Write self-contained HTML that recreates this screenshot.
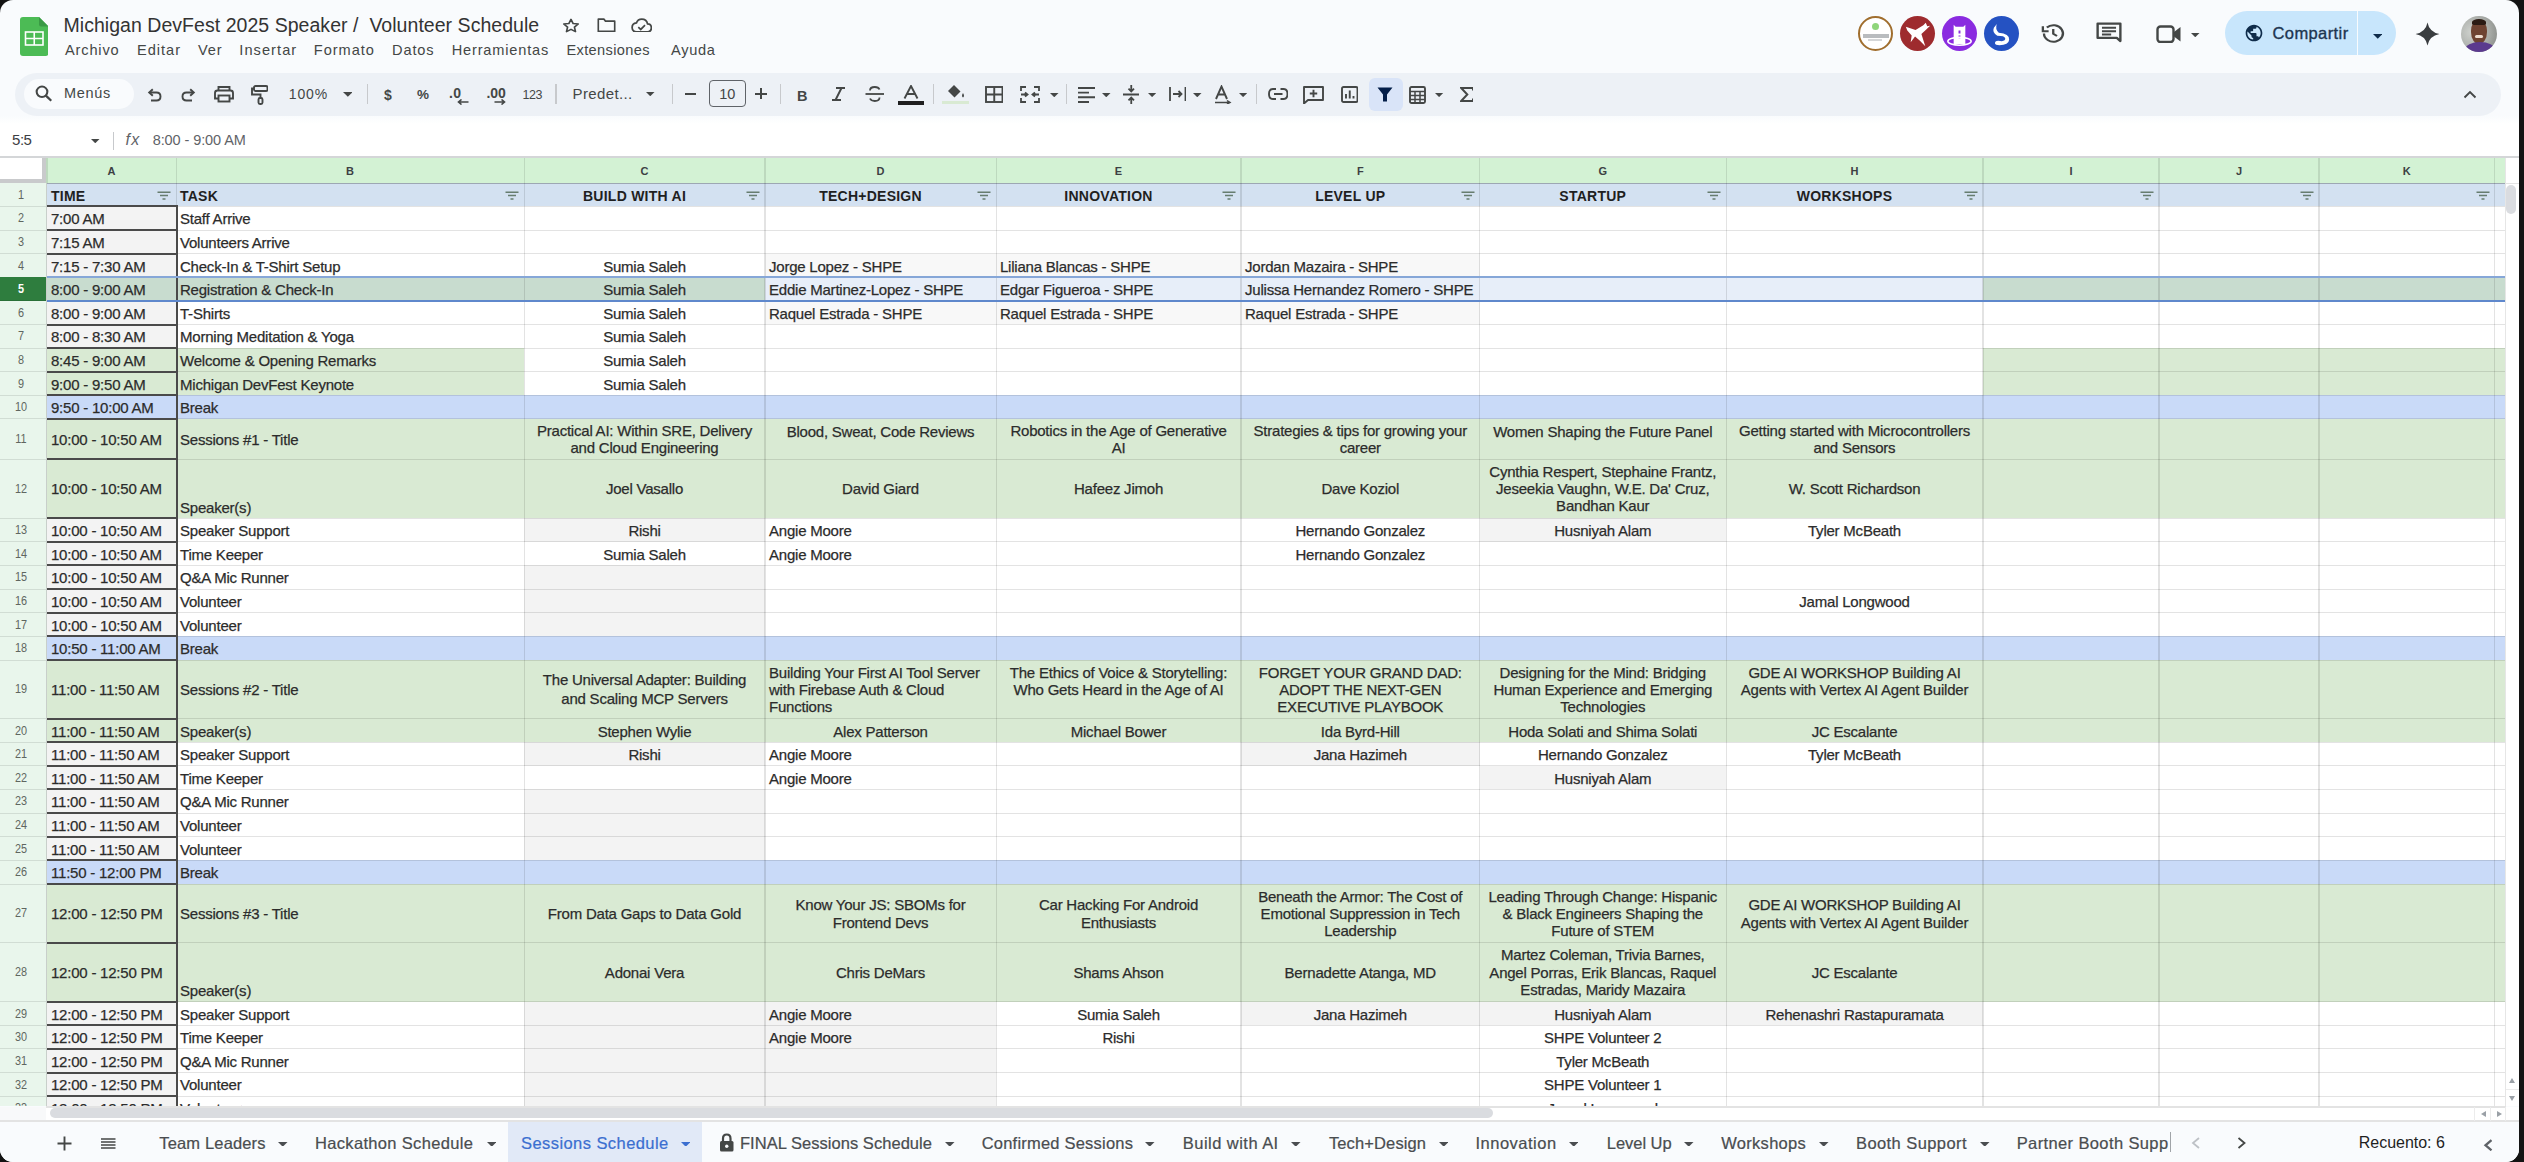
<!DOCTYPE html>
<html><head><meta charset="utf-8"><style>
html,body{margin:0;padding:0;background:#131313;width:2524px;height:1162px;overflow:hidden}
#win{position:absolute;left:0;top:0;width:2519px;height:1162px;border-radius:13px;background:#f9fbfd;overflow:hidden}
#win div,#win svg{position:absolute}
.t{white-space:pre;line-height:30px;font-family:"Liberation Sans",sans-serif}
</style></head><body><div id="win">
<svg style="left:19.5px;top:16.5px;" width="28.5" height="39" viewBox="0 0 28.5 39" preserveAspectRatio="none"><path d="M3 0H19L28.5 9.5V36Q28.5 39 25.5 39H3Q0 39 0 36V3Q0 0 3 0Z" fill="#4cbb55"/><path d="M19 0L28.5 9.5H21Q19 9.5 19 7.5Z" fill="#3a9a45"/><rect x="5.5" y="15" width="17.5" height="13" fill="none" stroke="#fff" stroke-width="1.6"/><path d="M5.5 21.5H23M14.25 15V28" stroke="#fff" stroke-width="1.6"/></svg>
<div class="t" style="left:63.5px;top:9.84px;font-size:19.5px;color:#333333;letter-spacing:0.04px;">Michigan DevFest 2025 Speaker /  Volunteer Schedule</div>
<svg style="left:561px;top:17px;" width="20" height="18" viewBox="0 0 24 24" preserveAspectRatio="none"><path d="M12 3.2l2.6 5.6 6.1.6-4.6 4.1 1.3 6-5.4-3.1-5.4 3.1 1.3-6-4.6-4.1 6.1-.6z" fill="none" stroke="#444746" stroke-width="2" stroke-linejoin="round"/></svg>
<svg style="left:597px;top:17.8px;" width="19" height="14.7" viewBox="0 0 22 15" preserveAspectRatio="none"><path d="M1.5 1.2H8l1.8 2H20.5V13.8H1.5Z" fill="none" stroke="#444746" stroke-width="1.9" stroke-linejoin="round"/></svg>
<svg style="left:630.5px;top:17.5px;" width="21.5" height="14.8" viewBox="0 0 23 15.5" preserveAspectRatio="none"><path d="M6 14.5H17.5Q21.8 14.5 21.8 10.3Q21.8 6.5 17.8 6.2Q16.5 1.2 11.5 1.2Q7.3 1.2 5.8 5.2Q1.2 5.7 1.2 10Q1.2 14.5 6 14.5Z" fill="none" stroke="#444746" stroke-width="1.9"/><path d="M7.8 9.6l2.6 2.4 4.6-4.6" fill="none" stroke="#444746" stroke-width="1.8"/></svg>
<div class="t" style="left:65px;top:35.24px;font-size:14.6px;color:#444746;letter-spacing:0.83px;">Archivo</div>
<div class="t" style="left:137px;top:35.24px;font-size:14.6px;color:#444746;letter-spacing:0.98px;">Editar</div>
<div class="t" style="left:198px;top:35.24px;font-size:14.6px;color:#444746;letter-spacing:0.86px;">Ver</div>
<div class="t" style="left:239.3px;top:35.24px;font-size:14.6px;color:#444746;letter-spacing:1.06px;">Insertar</div>
<div class="t" style="left:313.8px;top:35.24px;font-size:14.6px;color:#444746;letter-spacing:0.95px;">Formato</div>
<div class="t" style="left:392px;top:35.24px;font-size:14.6px;color:#444746;letter-spacing:0.87px;">Datos</div>
<div class="t" style="left:451.7px;top:35.24px;font-size:14.6px;color:#444746;letter-spacing:0.82px;">Herramientas</div>
<div class="t" style="left:566.4px;top:35.24px;font-size:14.6px;color:#444746;letter-spacing:0.36px;">Extensiones</div>
<div class="t" style="left:671px;top:35.24px;font-size:14.6px;color:#444746;letter-spacing:0.71px;">Ayuda</div>
<div style="left:1857.5px;top:15.5px;width:31.5px;height:31.5px;border-radius:50%;border:2.2px solid #a06e2e;background:#ffffff"></div>
<div style="left:1871.5px;top:22.5px;width:7.5px;height:7.5px;border-radius:50%;background:#8fd57a"></div>
<div style="left:1862.5px;top:34px;width:26px;height:3.5px;background:#b9bcbf"></div>
<div style="left:1868px;top:39px;width:14px;height:1.5px;background:#d5d7d9"></div>
<div style="left:1900px;top:15.5px;width:35px;height:35px;border-radius:50%;background:#9e2b2e"></div>
<svg style="left:1900px;top:15.5px;" width="35" height="35" viewBox="0 0 36 36" preserveAspectRatio="none"><path d="M6 11L16 14.5L24 9.5L26.5 7L28 10.5L31 10L27 14L22 18.5L26 31L20.5 25.5L15.5 21L11 27L12 20L7.5 15Z" fill="#fff"/></svg>
<div style="left:1941.7px;top:15.5px;width:35px;height:35px;border-radius:50%;background:#8a2be0"></div>
<svg style="left:1941.7px;top:15.5px;" width="35" height="35" viewBox="0 0 36 36" preserveAspectRatio="none"><path d="M12 9L14 11H22L24 9V29H12Z" fill="#fff"/><path d="M17 15h2v3h-2zM17 20h2v3h-2z" fill="#8a2be0"/><ellipse cx="18" cy="26" rx="12" ry="4" fill="none" stroke="#fff" stroke-width="1.6"/></svg>
<div style="left:1983.5px;top:15.5px;width:35.5px;height:35.5px;border-radius:50%;background:#2552c2"></div>
<svg style="left:1983.5px;top:15.5px;" width="35.5" height="35.5" viewBox="0 0 36 36" preserveAspectRatio="none"><path d="M13 8Q11 13 15 17Q26 18 25.5 24Q25 30 14 29.5Q10 29 11.5 26Q13 24.5 18 25.5Q22 25 21.5 22.5Q21 20 13.5 20Q8 17 10 12Z" fill="#fff"/></svg>
<svg style="left:2039.5px;top:22px;" width="26.5" height="23" viewBox="0 0 24 24" preserveAspectRatio="none"><path d="M3.6 12A8.6 8.6 0 1 0 6.2 5.8" fill="none" stroke="#444746" stroke-width="2.1"/><path d="M2.6 4.4V9.6H7.8" fill="none" stroke="#444746" stroke-width="2.1"/><path d="M12 7.2V12.3L15.4 14.6" fill="none" stroke="#444746" stroke-width="2.1"/></svg>
<svg style="left:2095.5px;top:22px;" width="26" height="23" viewBox="0 0 24 22" preserveAspectRatio="none"><path d="M1.5 1.5H22.5V18.2L19.2 15.2H1.5Z" fill="none" stroke="#444746" stroke-width="2.2" stroke-linejoin="round"/><path d="M5.5 5.5H18.5M5.5 8.8H18.5M5.5 12H14" stroke="#444746" stroke-width="1.8"/></svg>
<svg style="left:2156px;top:24.5px;" width="26" height="18.5" viewBox="0 0 26 18.5" preserveAspectRatio="none"><rect x="1.5" y="1.5" width="16" height="15.5" rx="3" fill="none" stroke="#444746" stroke-width="2.4"/><path d="M18 7L24.5 2V16.5L18 11.5Z" fill="#444746"/></svg>
<svg style="left:2191px;top:32.5px" width="8.5" height="4.25" viewBox="0 0 10 5"><path d="M0 0H10L5 5Z" fill="#444746"/></svg>
<div style="left:2225px;top:11px;width:171px;height:44px;border-radius:22px;background:#c8e6fc"></div>
<div style="left:2357px;top:11px;width:1px;height:44px;background:#f9fbfd;"></div>
<svg style="left:2244px;top:23px;" width="20" height="20" viewBox="0 0 24 24" preserveAspectRatio="none"><path d="M12 2C6.48 2 2 6.48 2 12s4.48 10 10 10 10-4.48 10-10S17.52 2 12 2zm-1 17.93c-3.95-.49-7-3.85-7-7.93 0-.62.08-1.21.21-1.79L9 15v1c0 1.1.9 2 2 2v1.930zm6.9-2.54c-.26-.81-1-1.39-1.9-1.39h-1v-3c0-.55-.45-1-1-1H8v-2h2c.55 0 1-.45 1-1V7h2c1.1 0 2-.9 2-2v-.41c2.930 1.19 5 4.06 5 7.41 0 2.08-.8 3.97-2.1 5.39z" fill="#0f2c4a"/></svg>
<div class="t" style="left:2272.5px;top:18.08px;font-size:16.5px;color:#1d3550;letter-spacing:0.4px;-webkit-text-stroke:0.35px #1d3550;">Compartir</div>
<svg style="left:2372.5px;top:34px" width="9.5" height="4.75" viewBox="0 0 10 5"><path d="M0 0H10L5 5Z" fill="#0f2c4a"/></svg>
<svg style="left:2415px;top:21.5px;" width="25" height="24" viewBox="0 0 24 24" preserveAspectRatio="none"><path d="M12 0.5Q13.8 10.2 23.5 12Q13.8 13.8 12 23.5Q10.2 13.8 0.5 12Q10.2 10.2 12 0.5Z" fill="#3a3d40"/></svg>
<div style="left:2461px;top:15.5px;width:36px;height:36px;border-radius:50%;overflow:hidden;background:radial-gradient(circle at 30% 45%,#d0d3cf 0,#a9aca8 55%,#7d807c 100%)"><div style="left:10px;top:4px;width:16px;height:24px;border-radius:45% 45% 50% 50%;background:#6e4332"></div><div style="left:11px;top:3px;width:14px;height:6px;border-radius:50% 50% 20% 20%;background:#2b1b14"></div><div style="left:4px;top:26px;width:30px;height:16px;border-radius:50% 50% 0 0;background:#5b3a8e"></div><div style="left:14px;top:19px;width:8px;height:3px;border-radius:2px;background:#ecdccf"></div></div>
<div style="left:15px;top:72.5px;width:2486px;height:43px;border-radius:22px;background:#edf1f6"></div>
<div style="left:23.5px;top:79px;width:110px;height:29.5px;border-radius:15px;background:#f9fbfd"></div>
<svg style="left:34.5px;top:85px;" width="17.5" height="17" viewBox="0 0 17 17" preserveAspectRatio="none"><circle cx="6.8" cy="6.8" r="5.2" fill="none" stroke="#444746" stroke-width="2"/><path d="M10.6 10.6L15.8 15.8" stroke="#444746" stroke-width="2.2"/></svg>
<div class="t" style="left:64px;top:78.28px;font-size:14.5px;color:#444746;letter-spacing:0.7px;">Menús</div>
<svg style="left:146.5px;top:88px;" width="15" height="14" viewBox="0 0 15 14" preserveAspectRatio="none"><path d="M3 4.5H9.5Q13.5 4.5 13.5 8.5Q13.5 12.5 9.5 12.5H4" fill="none" stroke="#444746" stroke-width="1.9"/><path d="M5.8 1.2L2.2 4.5L5.8 7.8" fill="none" stroke="#444746" stroke-width="1.9"/></svg>
<svg style="left:180.5px;top:88px;" width="15" height="14" viewBox="0 0 15 14" preserveAspectRatio="none"><path d="M12 4.5H5.5Q1.5 4.5 1.5 8.5Q1.5 12.5 5.5 12.5H11" fill="none" stroke="#444746" stroke-width="1.9"/><path d="M9.2 1.2L12.8 4.5L9.2 7.8" fill="none" stroke="#444746" stroke-width="1.9"/></svg>
<svg style="left:214px;top:86px;" width="20" height="16.5" viewBox="0 0 20 16.5" preserveAspectRatio="none"><path d="M4.5 4.5V1H15.5V4.5" fill="none" stroke="#444746" stroke-width="1.9"/><path d="M4.5 12.5H1V7Q1 4.5 3.5 4.5H16.5Q19 4.5 19 7V12.5H15.5" fill="none" stroke="#444746" stroke-width="1.9"/><rect x="4.5" y="9.5" width="11" height="6" fill="none" stroke="#444746" stroke-width="1.9"/></svg>
<svg style="left:250.5px;top:85px;" width="17.5" height="20" viewBox="0 0 17.5 20" preserveAspectRatio="none"><rect x="3" y="1" width="13.5" height="5" rx="1.5" fill="none" stroke="#444746" stroke-width="1.9"/><path d="M3 3.5H1V9.5H9.5V13" fill="none" stroke="#444746" stroke-width="1.9"/><rect x="7.5" y="13" width="4" height="6" rx="1.5" fill="none" stroke="#444746" stroke-width="1.9"/></svg>
<div class="t" style="left:288.7px;top:79.35px;font-size:14px;color:#444746;letter-spacing:0.92px;">100%</div>
<svg style="left:342.8px;top:92px" width="9.7" height="4.85" viewBox="0 0 10 5"><path d="M0 0H10L5 5Z" fill="#444746"/></svg>
<div style="left:367px;top:84px;width:1px;height:20px;background:#c7c9cc;"></div>
<div style="left:555px;top:84px;width:2px;height:20px;background:#c7c9cc;"></div>
<div style="left:672px;top:84px;width:1px;height:20px;background:#c7c9cc;"></div>
<div style="left:780px;top:84px;width:1px;height:20px;background:#c7c9cc;"></div>
<div style="left:933px;top:84px;width:1px;height:20px;background:#c7c9cc;"></div>
<div style="left:1066px;top:84px;width:1px;height:20px;background:#c7c9cc;"></div>
<div style="left:1256px;top:84px;width:1px;height:20px;background:#c7c9cc;"></div>
<div class="t" style="left:384px;top:79.65px;font-size:14px;color:#444746;font-weight:bold;">$</div>
<div class="t" style="left:417px;top:79.82px;font-size:13.5px;color:#444746;font-weight:bold;">%</div>
<div class="t" style="left:449px;top:77.65px;font-size:14px;color:#444746;font-weight:bold;letter-spacing:0.41px;">.0</div>
<svg style="left:457px;top:99px;" width="12" height="6" viewBox="0 0 12 6" preserveAspectRatio="none"><path d="M11.5 3H2M4.5 0.5L1.5 3L4.5 5.5" fill="none" stroke="#444746" stroke-width="1.6"/></svg>
<div class="t" style="left:486.5px;top:77.65px;font-size:14px;color:#444746;font-weight:bold;letter-spacing:-0.15px;">.00</div>
<svg style="left:494px;top:99px;" width="12" height="6" viewBox="0 0 12 6" preserveAspectRatio="none"><path d="M0.5 3H10M7.5 0.5L10.5 3L7.5 5.5" fill="none" stroke="#444746" stroke-width="1.6"/></svg>
<div class="t" style="left:522.5px;top:79.87px;font-size:12.5px;color:#444746;letter-spacing:-0.45px;">123</div>
<div class="t" style="left:572.6px;top:79px;font-size:15px;color:#444746;letter-spacing:0.37px;">Predet...</div>
<svg style="left:646px;top:92px" width="8.5" height="4.25" viewBox="0 0 10 5"><path d="M0 0H10L5 5Z" fill="#444746"/></svg>
<div style="left:685px;top:93px;width:11px;height:2px;background:#444746;"></div>
<div style="left:708.6px;top:80px;width:35px;height:25px;border:1.3px solid #5f6368;border-radius:4px"></div>
<div class="t" style="left:-272.8px;top:79.48px;width:2000px;text-align:center;font-size:14.5px;color:#444746;">10</div>
<div style="left:755px;top:93px;width:12px;height:2px;background:#444746;"></div>
<div style="left:760px;top:88px;width:2px;height:11px;background:#444746;"></div>
<div class="t" style="left:797px;top:80.58px;font-size:14.5px;color:#444746;font-weight:bold;">B</div>
<svg style="left:831px;top:87px;" width="15" height="14" viewBox="0 0 15 14" preserveAspectRatio="none"><path d="M5 1H14M1 13H10M10.5 1L4.5 13" fill="none" stroke="#444746" stroke-width="1.9"/></svg>
<svg style="left:864.5px;top:86px;" width="19.5" height="16" viewBox="0 0 19.5 16" preserveAspectRatio="none"><path d="M14.5 3.5Q13.5 1 9.8 1Q5 1 5 4.5" fill="none" stroke="#444746" stroke-width="1.8"/><path d="M5 12.5Q6 15 9.8 15Q14.5 15 14.5 11.5" fill="none" stroke="#444746" stroke-width="1.8"/><path d="M0.5 8H19" stroke="#444746" stroke-width="1.8"/></svg>
<svg style="left:900px;top:85px;" width="22" height="14" viewBox="0 0 22 14" preserveAspectRatio="none"><path d="M4.5 13.5L11 1L17.5 13.5M7 9H15" fill="none" stroke="#444746" stroke-width="1.9"/></svg>
<div style="left:898px;top:101px;width:26px;height:4px;background:#1f1f1f;"></div>
<svg style="left:946px;top:83.5px;" width="20" height="15" viewBox="0 0 20 15" preserveAspectRatio="none"><path d="M2 7L8 1L14.5 7.5L8.5 13.5Z" fill="#444746"/><path d="M17 9Q19 12 17 13.5Q15 12 17 9Z" fill="#444746"/></svg>
<div style="left:942px;top:101px;width:27px;height:3px;background:#d9ead3;"></div>
<svg style="left:984.5px;top:86px;" width="18.5" height="17" viewBox="0 0 18.5 17" preserveAspectRatio="none"><rect x="1" y="1" width="16.5" height="15" fill="none" stroke="#444746" stroke-width="1.9"/><path d="M9.25 1V16M1 8.5H17.5" stroke="#444746" stroke-width="1.9"/></svg>
<svg style="left:1020px;top:86px;" width="20" height="17" viewBox="0 0 20 17" preserveAspectRatio="none"><path d="M1 5V1H6M14 1H19V5M19 12V16H14M6 16H1V12M1 8.5H7M13 8.5H19M5 6.5L7.5 8.5L5 10.5M15 6.5L12.5 8.5L15 10.5" fill="none" stroke="#444746" stroke-width="1.8"/></svg>
<svg style="left:1050px;top:92.5px" width="8.5" height="4.25" viewBox="0 0 10 5"><path d="M0 0H10L5 5Z" fill="#444746"/></svg>
<svg style="left:1077.5px;top:86.5px;" width="17.5" height="16" viewBox="0 0 17.5 16" preserveAspectRatio="none"><path d="M0 1H17.5M0 5.6H11M0 10.3H17.5M0 15H11" stroke="#444746" stroke-width="1.9"/></svg>
<svg style="left:1102px;top:92.5px" width="8.5" height="4.25" viewBox="0 0 10 5"><path d="M0 0H10L5 5Z" fill="#444746"/></svg>
<svg style="left:1122.5px;top:85px;" width="16.5" height="19" viewBox="0 0 16.5 19" preserveAspectRatio="none"><path d="M0 9.5H16.5M8.25 0V6.5M5.5 3.7L8.25 6.5L11 3.7M8.25 19V12.5M5.5 15.3L8.25 12.5L11 15.3" fill="none" stroke="#444746" stroke-width="1.8"/></svg>
<svg style="left:1147.8px;top:92.5px" width="8.2" height="4.1" viewBox="0 0 10 5"><path d="M0 0H10L5 5Z" fill="#444746"/></svg>
<svg style="left:1168.5px;top:86px;" width="17.5" height="16" viewBox="0 0 17.5 16" preserveAspectRatio="none"><path d="M1 1V15M16.5 1V15M4 8H12M9.5 5L12.5 8L9.5 11" fill="none" stroke="#444746" stroke-width="1.8"/></svg>
<svg style="left:1193px;top:92.5px" width="8.5" height="4.25" viewBox="0 0 10 5"><path d="M0 0H10L5 5Z" fill="#444746"/></svg>
<svg style="left:1213.5px;top:85px;" width="18" height="19" viewBox="0 0 18 19" preserveAspectRatio="none"><path d="M2 14L7.5 1.5L13 14M4.2 9.5H10.8" fill="none" stroke="#444746" stroke-width="1.9"/><path d="M1 17.5H15M13 15.5L16 17.5L13 19" fill="none" stroke="#444746" stroke-width="1.5"/></svg>
<svg style="left:1238.8px;top:92.5px" width="8.2" height="4.1" viewBox="0 0 10 5"><path d="M0 0H10L5 5Z" fill="#444746"/></svg>
<svg style="left:1267.5px;top:88px;" width="20.5" height="12" viewBox="0 0 20.5 12" preserveAspectRatio="none"><path d="M8 1H5Q1 1 1 6Q1 11 5 11H8M12.5 1H15.5Q19.5 1 19.5 6Q19.5 11 15.5 11H12.5M6 6H14.5" fill="none" stroke="#444746" stroke-width="1.9"/></svg>
<svg style="left:1303px;top:85.5px;" width="21" height="18.5" viewBox="0 0 21 18.5" preserveAspectRatio="none"><path d="M1 1H20V14H5L1 17.5Z" fill="none" stroke="#444746" stroke-width="1.9" stroke-linejoin="round"/><path d="M10.5 3.8V11.2M6.8 7.5H14.2" stroke="#444746" stroke-width="1.9"/></svg>
<svg style="left:1340.5px;top:86px;" width="17.5" height="17" viewBox="0 0 17.5 17" preserveAspectRatio="none"><rect x="1" y="1" width="15.5" height="15" rx="1.5" fill="none" stroke="#444746" stroke-width="1.9"/><path d="M5 12.5V8M8.75 12.5V4.5M12.5 12.5V10" stroke="#444746" stroke-width="1.9"/></svg>
<div style="left:1368.8px;top:78px;width:34px;height:32.5px;border-radius:6px;background:#d9e4f8"></div>
<svg style="left:1377px;top:87px;" width="16" height="15" viewBox="0 0 16 15" preserveAspectRatio="none"><path d="M0.5 0.5H15.5L10 7.5V14.5H6V7.5Z" fill="#041e49"/></svg>
<svg style="left:1409px;top:86px;" width="19" height="18" viewBox="0 0 19 18" preserveAspectRatio="none"><rect x="1" y="1" width="15" height="16" rx="1.5" fill="none" stroke="#444746" stroke-width="1.9"/><path d="M1 5.5H16M6 5.5V17M11 5.5V17M1 9.5H16M1 13.5H16" stroke="#444746" stroke-width="1.5"/></svg>
<svg style="left:1435.4px;top:92.5px" width="8.2" height="4.1" viewBox="0 0 10 5"><path d="M0 0H10L5 5Z" fill="#444746"/></svg>
<svg style="left:1459.5px;top:87px;" width="13.5" height="15" viewBox="0 0 13.5 15" preserveAspectRatio="none"><path d="M13 3.5V1H1.2L7.3 7.5L1.2 14H13V11.5" fill="none" stroke="#444746" stroke-width="2" stroke-linejoin="miter"/></svg>
<svg style="left:2463px;top:89px;" width="14" height="10" viewBox="0 0 14 10" preserveAspectRatio="none"><path d="M1.5 8.5L7 3L12.5 8.5" fill="none" stroke="#444746" stroke-width="1.9"/></svg>
<div style="left:0px;top:123px;width:2519px;height:33px;background:#ffffff;"></div>
<div style="left:0;top:116px;width:2519px;height:8px;background:linear-gradient(#f9fbfd,#ffffff)"></div>
<div class="t" style="left:12px;top:125px;font-size:15px;color:#3c4043;letter-spacing:-0.45px;">5:5</div>
<svg style="left:91px;top:138.6px" width="8.5" height="4.25" viewBox="0 0 10 5"><path d="M0 0H10L5 5Z" fill="#444746"/></svg>
<div style="left:113px;top:132px;width:1px;height:18px;background:#c7c9cc;"></div>
<div class="t" style="left:125.5px;top:125.46px;font-size:16px;color:#5f6368;letter-spacing:1.28px;font-style:italic;font-family:"Liberation Serif",serif;">fx</div>
<div class="t" style="left:152.7px;top:125.18px;font-size:14.5px;color:#5f6368;letter-spacing:-0.09px;">8:00 - 9:00 AM</div>
<div id="grid" style="left:0;top:0;width:2519px;height:1106px;overflow:hidden;position:absolute">
<div style="left:46px;top:158px;width:2460px;height:949px;background:#fff;"></div>
<div style="left:47px;top:206px;width:129px;height:24px;background:#f3f3f3;"></div>
<div style="left:47px;top:230px;width:129px;height:24px;background:#f3f3f3;"></div>
<div style="left:47px;top:254px;width:129px;height:23px;background:#f3f3f3;"></div>
<div style="left:47px;top:277px;width:129px;height:24px;background:#c8dccf;"></div>
<div style="left:47px;top:301px;width:129px;height:23px;background:#f3f3f3;"></div>
<div style="left:47px;top:324px;width:129px;height:24px;background:#f3f3f3;"></div>
<div style="left:47px;top:348px;width:129px;height:24px;background:#d9ead3;"></div>
<div style="left:47px;top:372px;width:129px;height:23px;background:#d9ead3;"></div>
<div style="left:47px;top:395px;width:129px;height:24px;background:#c9daf8;"></div>
<div style="left:47px;top:419px;width:129px;height:41px;background:#d9ead3;"></div>
<div style="left:47px;top:460px;width:129px;height:58px;background:#d9ead3;"></div>
<div style="left:47px;top:518px;width:129px;height:24px;background:#f3f3f3;"></div>
<div style="left:47px;top:542px;width:129px;height:23px;background:#f3f3f3;"></div>
<div style="left:47px;top:565px;width:129px;height:24px;background:#f3f3f3;"></div>
<div style="left:47px;top:589px;width:129px;height:24px;background:#f3f3f3;"></div>
<div style="left:47px;top:613px;width:129px;height:23px;background:#f3f3f3;"></div>
<div style="left:47px;top:636px;width:129px;height:24px;background:#c9daf8;"></div>
<div style="left:47px;top:660px;width:129px;height:59px;background:#d9ead3;"></div>
<div style="left:47px;top:719px;width:129px;height:23px;background:#d9ead3;"></div>
<div style="left:47px;top:742px;width:129px;height:24px;background:#f3f3f3;"></div>
<div style="left:47px;top:766px;width:129px;height:23px;background:#f3f3f3;"></div>
<div style="left:47px;top:789px;width:129px;height:24px;background:#f3f3f3;"></div>
<div style="left:47px;top:813px;width:129px;height:24px;background:#f3f3f3;"></div>
<div style="left:47px;top:837px;width:129px;height:23px;background:#f3f3f3;"></div>
<div style="left:47px;top:860px;width:129px;height:24px;background:#c9daf8;"></div>
<div style="left:47px;top:884px;width:129px;height:59px;background:#d9ead3;"></div>
<div style="left:47px;top:943px;width:129px;height:59px;background:#d9ead3;"></div>
<div style="left:47px;top:1002px;width:129px;height:23px;background:#f3f3f3;"></div>
<div style="left:47px;top:1025px;width:129px;height:24px;background:#f3f3f3;"></div>
<div style="left:47px;top:1049px;width:129px;height:24px;background:#f3f3f3;"></div>
<div style="left:47px;top:1073px;width:129px;height:23px;background:#f3f3f3;"></div>
<div style="left:47px;top:1096px;width:129px;height:11px;background:#f3f3f3;"></div>
<div style="left:47px;top:183px;width:129px;height:23px;background:#d3e1f1;"></div>
<div style="left:176px;top:183px;width:348px;height:23px;background:#d3e1f1;"></div>
<div style="left:524px;top:183px;width:241px;height:23px;background:#d3e1f1;"></div>
<div style="left:765px;top:183px;width:231px;height:23px;background:#d3e1f1;"></div>
<div style="left:996px;top:183px;width:245px;height:23px;background:#d3e1f1;"></div>
<div style="left:1241px;top:183px;width:239px;height:23px;background:#d3e1f1;"></div>
<div style="left:1480px;top:183px;width:246px;height:23px;background:#d3e1f1;"></div>
<div style="left:1726px;top:183px;width:257px;height:23px;background:#d3e1f1;"></div>
<div style="left:1983px;top:183px;width:176px;height:23px;background:#d3e1f1;"></div>
<div style="left:2159px;top:183px;width:160px;height:23px;background:#d3e1f1;"></div>
<div style="left:2319px;top:183px;width:175px;height:23px;background:#d3e1f1;"></div>
<div style="left:2494px;top:183px;width:12px;height:23px;background:#d3e1f1;"></div>
<div style="left:176px;top:348px;width:348px;height:24px;background:#d9ead3;"></div>
<div style="left:1983px;top:348px;width:176px;height:24px;background:#d9ead3;"></div>
<div style="left:2159px;top:348px;width:160px;height:24px;background:#d9ead3;"></div>
<div style="left:2319px;top:348px;width:175px;height:24px;background:#d9ead3;"></div>
<div style="left:2494px;top:348px;width:12px;height:24px;background:#d9ead3;"></div>
<div style="left:176px;top:372px;width:348px;height:23px;background:#d9ead3;"></div>
<div style="left:1983px;top:372px;width:176px;height:23px;background:#d9ead3;"></div>
<div style="left:2159px;top:372px;width:160px;height:23px;background:#d9ead3;"></div>
<div style="left:2319px;top:372px;width:175px;height:23px;background:#d9ead3;"></div>
<div style="left:2494px;top:372px;width:12px;height:23px;background:#d9ead3;"></div>
<div style="left:176px;top:395px;width:348px;height:24px;background:#c9daf8;"></div>
<div style="left:524px;top:395px;width:241px;height:24px;background:#c9daf8;"></div>
<div style="left:765px;top:395px;width:231px;height:24px;background:#c9daf8;"></div>
<div style="left:996px;top:395px;width:245px;height:24px;background:#c9daf8;"></div>
<div style="left:1241px;top:395px;width:239px;height:24px;background:#c9daf8;"></div>
<div style="left:1480px;top:395px;width:246px;height:24px;background:#c9daf8;"></div>
<div style="left:1726px;top:395px;width:257px;height:24px;background:#c9daf8;"></div>
<div style="left:1983px;top:395px;width:176px;height:24px;background:#c9daf8;"></div>
<div style="left:2159px;top:395px;width:160px;height:24px;background:#c9daf8;"></div>
<div style="left:2319px;top:395px;width:175px;height:24px;background:#c9daf8;"></div>
<div style="left:2494px;top:395px;width:12px;height:24px;background:#c9daf8;"></div>
<div style="left:176px;top:636px;width:348px;height:24px;background:#c9daf8;"></div>
<div style="left:524px;top:636px;width:241px;height:24px;background:#c9daf8;"></div>
<div style="left:765px;top:636px;width:231px;height:24px;background:#c9daf8;"></div>
<div style="left:996px;top:636px;width:245px;height:24px;background:#c9daf8;"></div>
<div style="left:1241px;top:636px;width:239px;height:24px;background:#c9daf8;"></div>
<div style="left:1480px;top:636px;width:246px;height:24px;background:#c9daf8;"></div>
<div style="left:1726px;top:636px;width:257px;height:24px;background:#c9daf8;"></div>
<div style="left:1983px;top:636px;width:176px;height:24px;background:#c9daf8;"></div>
<div style="left:2159px;top:636px;width:160px;height:24px;background:#c9daf8;"></div>
<div style="left:2319px;top:636px;width:175px;height:24px;background:#c9daf8;"></div>
<div style="left:2494px;top:636px;width:12px;height:24px;background:#c9daf8;"></div>
<div style="left:176px;top:860px;width:348px;height:24px;background:#c9daf8;"></div>
<div style="left:524px;top:860px;width:241px;height:24px;background:#c9daf8;"></div>
<div style="left:765px;top:860px;width:231px;height:24px;background:#c9daf8;"></div>
<div style="left:996px;top:860px;width:245px;height:24px;background:#c9daf8;"></div>
<div style="left:1241px;top:860px;width:239px;height:24px;background:#c9daf8;"></div>
<div style="left:1480px;top:860px;width:246px;height:24px;background:#c9daf8;"></div>
<div style="left:1726px;top:860px;width:257px;height:24px;background:#c9daf8;"></div>
<div style="left:1983px;top:860px;width:176px;height:24px;background:#c9daf8;"></div>
<div style="left:2159px;top:860px;width:160px;height:24px;background:#c9daf8;"></div>
<div style="left:2319px;top:860px;width:175px;height:24px;background:#c9daf8;"></div>
<div style="left:2494px;top:860px;width:12px;height:24px;background:#c9daf8;"></div>
<div style="left:176px;top:419px;width:348px;height:41px;background:#d9ead3;"></div>
<div style="left:524px;top:419px;width:241px;height:41px;background:#d9ead3;"></div>
<div style="left:765px;top:419px;width:231px;height:41px;background:#d9ead3;"></div>
<div style="left:996px;top:419px;width:245px;height:41px;background:#d9ead3;"></div>
<div style="left:1241px;top:419px;width:239px;height:41px;background:#d9ead3;"></div>
<div style="left:1480px;top:419px;width:246px;height:41px;background:#d9ead3;"></div>
<div style="left:1726px;top:419px;width:257px;height:41px;background:#d9ead3;"></div>
<div style="left:1983px;top:419px;width:176px;height:41px;background:#d9ead3;"></div>
<div style="left:2159px;top:419px;width:160px;height:41px;background:#d9ead3;"></div>
<div style="left:2319px;top:419px;width:175px;height:41px;background:#d9ead3;"></div>
<div style="left:2494px;top:419px;width:12px;height:41px;background:#d9ead3;"></div>
<div style="left:176px;top:460px;width:348px;height:58px;background:#d9ead3;"></div>
<div style="left:524px;top:460px;width:241px;height:58px;background:#d9ead3;"></div>
<div style="left:765px;top:460px;width:231px;height:58px;background:#d9ead3;"></div>
<div style="left:996px;top:460px;width:245px;height:58px;background:#d9ead3;"></div>
<div style="left:1241px;top:460px;width:239px;height:58px;background:#d9ead3;"></div>
<div style="left:1480px;top:460px;width:246px;height:58px;background:#d9ead3;"></div>
<div style="left:1726px;top:460px;width:257px;height:58px;background:#d9ead3;"></div>
<div style="left:1983px;top:460px;width:176px;height:58px;background:#d9ead3;"></div>
<div style="left:2159px;top:460px;width:160px;height:58px;background:#d9ead3;"></div>
<div style="left:2319px;top:460px;width:175px;height:58px;background:#d9ead3;"></div>
<div style="left:2494px;top:460px;width:12px;height:58px;background:#d9ead3;"></div>
<div style="left:176px;top:660px;width:348px;height:59px;background:#d9ead3;"></div>
<div style="left:524px;top:660px;width:241px;height:59px;background:#d9ead3;"></div>
<div style="left:765px;top:660px;width:231px;height:59px;background:#d9ead3;"></div>
<div style="left:996px;top:660px;width:245px;height:59px;background:#d9ead3;"></div>
<div style="left:1241px;top:660px;width:239px;height:59px;background:#d9ead3;"></div>
<div style="left:1480px;top:660px;width:246px;height:59px;background:#d9ead3;"></div>
<div style="left:1726px;top:660px;width:257px;height:59px;background:#d9ead3;"></div>
<div style="left:1983px;top:660px;width:176px;height:59px;background:#d9ead3;"></div>
<div style="left:2159px;top:660px;width:160px;height:59px;background:#d9ead3;"></div>
<div style="left:2319px;top:660px;width:175px;height:59px;background:#d9ead3;"></div>
<div style="left:2494px;top:660px;width:12px;height:59px;background:#d9ead3;"></div>
<div style="left:176px;top:719px;width:348px;height:23px;background:#d9ead3;"></div>
<div style="left:524px;top:719px;width:241px;height:23px;background:#d9ead3;"></div>
<div style="left:765px;top:719px;width:231px;height:23px;background:#d9ead3;"></div>
<div style="left:996px;top:719px;width:245px;height:23px;background:#d9ead3;"></div>
<div style="left:1241px;top:719px;width:239px;height:23px;background:#d9ead3;"></div>
<div style="left:1480px;top:719px;width:246px;height:23px;background:#d9ead3;"></div>
<div style="left:1726px;top:719px;width:257px;height:23px;background:#d9ead3;"></div>
<div style="left:1983px;top:719px;width:176px;height:23px;background:#d9ead3;"></div>
<div style="left:2159px;top:719px;width:160px;height:23px;background:#d9ead3;"></div>
<div style="left:2319px;top:719px;width:175px;height:23px;background:#d9ead3;"></div>
<div style="left:2494px;top:719px;width:12px;height:23px;background:#d9ead3;"></div>
<div style="left:176px;top:884px;width:348px;height:59px;background:#d9ead3;"></div>
<div style="left:524px;top:884px;width:241px;height:59px;background:#d9ead3;"></div>
<div style="left:765px;top:884px;width:231px;height:59px;background:#d9ead3;"></div>
<div style="left:996px;top:884px;width:245px;height:59px;background:#d9ead3;"></div>
<div style="left:1241px;top:884px;width:239px;height:59px;background:#d9ead3;"></div>
<div style="left:1480px;top:884px;width:246px;height:59px;background:#d9ead3;"></div>
<div style="left:1726px;top:884px;width:257px;height:59px;background:#d9ead3;"></div>
<div style="left:1983px;top:884px;width:176px;height:59px;background:#d9ead3;"></div>
<div style="left:2159px;top:884px;width:160px;height:59px;background:#d9ead3;"></div>
<div style="left:2319px;top:884px;width:175px;height:59px;background:#d9ead3;"></div>
<div style="left:2494px;top:884px;width:12px;height:59px;background:#d9ead3;"></div>
<div style="left:176px;top:943px;width:348px;height:59px;background:#d9ead3;"></div>
<div style="left:524px;top:943px;width:241px;height:59px;background:#d9ead3;"></div>
<div style="left:765px;top:943px;width:231px;height:59px;background:#d9ead3;"></div>
<div style="left:996px;top:943px;width:245px;height:59px;background:#d9ead3;"></div>
<div style="left:1241px;top:943px;width:239px;height:59px;background:#d9ead3;"></div>
<div style="left:1480px;top:943px;width:246px;height:59px;background:#d9ead3;"></div>
<div style="left:1726px;top:943px;width:257px;height:59px;background:#d9ead3;"></div>
<div style="left:1983px;top:943px;width:176px;height:59px;background:#d9ead3;"></div>
<div style="left:2159px;top:943px;width:160px;height:59px;background:#d9ead3;"></div>
<div style="left:2319px;top:943px;width:175px;height:59px;background:#d9ead3;"></div>
<div style="left:2494px;top:943px;width:12px;height:59px;background:#d9ead3;"></div>
<div style="left:765px;top:254px;width:231px;height:23px;background:#f8f8f8;"></div>
<div style="left:996px;top:254px;width:245px;height:23px;background:#f8f8f8;"></div>
<div style="left:1241px;top:254px;width:239px;height:23px;background:#f8f8f8;"></div>
<div style="left:765px;top:301px;width:231px;height:23px;background:#f8f8f8;"></div>
<div style="left:996px;top:301px;width:245px;height:23px;background:#f8f8f8;"></div>
<div style="left:1241px;top:301px;width:239px;height:23px;background:#f8f8f8;"></div>
<div style="left:524px;top:518px;width:241px;height:24px;background:#f3f3f3;"></div>
<div style="left:1480px;top:518px;width:246px;height:24px;background:#f3f3f3;"></div>
<div style="left:524px;top:565px;width:241px;height:24px;background:#f3f3f3;"></div>
<div style="left:524px;top:589px;width:241px;height:24px;background:#f3f3f3;"></div>
<div style="left:524px;top:613px;width:241px;height:23px;background:#f3f3f3;"></div>
<div style="left:524px;top:742px;width:241px;height:24px;background:#f3f3f3;"></div>
<div style="left:1241px;top:742px;width:239px;height:24px;background:#f3f3f3;"></div>
<div style="left:1480px;top:766px;width:246px;height:23px;background:#f3f3f3;"></div>
<div style="left:524px;top:789px;width:241px;height:24px;background:#f3f3f3;"></div>
<div style="left:524px;top:813px;width:241px;height:24px;background:#f3f3f3;"></div>
<div style="left:524px;top:837px;width:241px;height:23px;background:#f3f3f3;"></div>
<div style="left:524px;top:1002px;width:241px;height:23px;background:#f3f3f3;"></div>
<div style="left:524px;top:1025px;width:241px;height:24px;background:#f3f3f3;"></div>
<div style="left:524px;top:1049px;width:241px;height:24px;background:#f3f3f3;"></div>
<div style="left:524px;top:1073px;width:241px;height:23px;background:#f3f3f3;"></div>
<div style="left:524px;top:1096px;width:241px;height:11px;background:#f3f3f3;"></div>
<div style="left:765px;top:1002px;width:231px;height:23px;background:#f3f3f3;"></div>
<div style="left:765px;top:1025px;width:231px;height:24px;background:#f3f3f3;"></div>
<div style="left:765px;top:1049px;width:231px;height:24px;background:#f3f3f3;"></div>
<div style="left:765px;top:1073px;width:231px;height:23px;background:#f3f3f3;"></div>
<div style="left:765px;top:1096px;width:231px;height:11px;background:#f3f3f3;"></div>
<div style="left:1241px;top:1002px;width:239px;height:23px;background:#f3f3f3;"></div>
<div style="left:1480px;top:1002px;width:246px;height:23px;background:#f3f3f3;"></div>
<div style="left:1726px;top:1002px;width:257px;height:23px;background:#f3f3f3;"></div>
<div style="left:176px;top:277px;width:348px;height:24px;background:#c8dccf;"></div>
<div style="left:524px;top:277px;width:241px;height:24px;background:#c8dccf;"></div>
<div style="left:765px;top:277px;width:231px;height:24px;background:#e7eef9;"></div>
<div style="left:996px;top:277px;width:245px;height:24px;background:#e7eef9;"></div>
<div style="left:1241px;top:277px;width:239px;height:24px;background:#e7eef9;"></div>
<div style="left:1480px;top:277px;width:246px;height:24px;background:#e7eef9;"></div>
<div style="left:1726px;top:277px;width:257px;height:24px;background:#e7eef9;"></div>
<div style="left:1983px;top:277px;width:176px;height:24px;background:#c8dccf;"></div>
<div style="left:2159px;top:277px;width:160px;height:24px;background:#c8dccf;"></div>
<div style="left:2319px;top:277px;width:175px;height:24px;background:#c8dccf;"></div>
<div style="left:2494px;top:277px;width:12px;height:24px;background:#c8dccf;"></div>
<div style="left:47px;top:206px;width:2459px;height:1px;background:rgba(0,0,0,0.11);"></div>
<div style="left:47px;top:230px;width:2459px;height:1px;background:rgba(0,0,0,0.11);"></div>
<div style="left:47px;top:253px;width:2459px;height:1px;background:rgba(0,0,0,0.11);"></div>
<div style="left:47px;top:277px;width:2459px;height:1px;background:rgba(0,0,0,0.11);"></div>
<div style="left:47px;top:300px;width:2459px;height:1px;background:rgba(0,0,0,0.11);"></div>
<div style="left:47px;top:324px;width:2459px;height:1px;background:rgba(0,0,0,0.11);"></div>
<div style="left:47px;top:348px;width:2459px;height:1px;background:rgba(0,0,0,0.11);"></div>
<div style="left:47px;top:371px;width:2459px;height:1px;background:rgba(0,0,0,0.11);"></div>
<div style="left:47px;top:395px;width:2459px;height:1px;background:rgba(0,0,0,0.11);"></div>
<div style="left:47px;top:418px;width:2459px;height:1px;background:rgba(0,0,0,0.11);"></div>
<div style="left:47px;top:459px;width:2459px;height:1px;background:rgba(0,0,0,0.11);"></div>
<div style="left:47px;top:518px;width:2459px;height:1px;background:rgba(0,0,0,0.11);"></div>
<div style="left:47px;top:541px;width:2459px;height:1px;background:rgba(0,0,0,0.11);"></div>
<div style="left:47px;top:565px;width:2459px;height:1px;background:rgba(0,0,0,0.11);"></div>
<div style="left:47px;top:589px;width:2459px;height:1px;background:rgba(0,0,0,0.11);"></div>
<div style="left:47px;top:612px;width:2459px;height:1px;background:rgba(0,0,0,0.11);"></div>
<div style="left:47px;top:636px;width:2459px;height:1px;background:rgba(0,0,0,0.11);"></div>
<div style="left:47px;top:660px;width:2459px;height:1px;background:rgba(0,0,0,0.11);"></div>
<div style="left:47px;top:718px;width:2459px;height:1px;background:rgba(0,0,0,0.11);"></div>
<div style="left:47px;top:742px;width:2459px;height:1px;background:rgba(0,0,0,0.11);"></div>
<div style="left:47px;top:765px;width:2459px;height:1px;background:rgba(0,0,0,0.11);"></div>
<div style="left:47px;top:789px;width:2459px;height:1px;background:rgba(0,0,0,0.11);"></div>
<div style="left:47px;top:813px;width:2459px;height:1px;background:rgba(0,0,0,0.11);"></div>
<div style="left:47px;top:836px;width:2459px;height:1px;background:rgba(0,0,0,0.11);"></div>
<div style="left:47px;top:860px;width:2459px;height:1px;background:rgba(0,0,0,0.11);"></div>
<div style="left:47px;top:884px;width:2459px;height:1px;background:rgba(0,0,0,0.11);"></div>
<div style="left:47px;top:942px;width:2459px;height:1px;background:rgba(0,0,0,0.11);"></div>
<div style="left:47px;top:1001px;width:2459px;height:1px;background:rgba(0,0,0,0.11);"></div>
<div style="left:47px;top:1025px;width:2459px;height:1px;background:rgba(0,0,0,0.11);"></div>
<div style="left:47px;top:1048px;width:2459px;height:1px;background:rgba(0,0,0,0.11);"></div>
<div style="left:47px;top:1072px;width:2459px;height:1px;background:rgba(0,0,0,0.11);"></div>
<div style="left:47px;top:1096px;width:2459px;height:1px;background:rgba(0,0,0,0.11);"></div>
<div style="left:176px;top:183px;width:1px;height:924px;background:rgba(0,0,0,0.11);"></div>
<div style="left:524px;top:183px;width:1px;height:924px;background:rgba(0,0,0,0.11);"></div>
<div style="left:764px;top:183px;width:2px;height:924px;background:rgba(0,0,0,0.11);"></div>
<div style="left:996px;top:183px;width:1px;height:924px;background:rgba(0,0,0,0.11);"></div>
<div style="left:1240px;top:183px;width:2px;height:924px;background:rgba(0,0,0,0.11);"></div>
<div style="left:1479px;top:183px;width:1px;height:924px;background:rgba(0,0,0,0.11);"></div>
<div style="left:1726px;top:183px;width:1px;height:924px;background:rgba(0,0,0,0.11);"></div>
<div style="left:1982px;top:183px;width:2px;height:924px;background:rgba(0,0,0,0.11);"></div>
<div style="left:2158px;top:183px;width:2px;height:924px;background:rgba(0,0,0,0.11);"></div>
<div style="left:2318px;top:183px;width:2px;height:924px;background:rgba(0,0,0,0.11);"></div>
<div style="left:2494px;top:183px;width:1px;height:924px;background:rgba(0,0,0,0.11);"></div>
<div style="left:2505px;top:183px;width:1px;height:924px;background:rgba(0,0,0,0.11);"></div>
<div style="left:47px;top:205px;width:131px;height:2px;background:#4a4a4a;"></div>
<div style="left:47px;top:229px;width:131px;height:2px;background:#4a4a4a;"></div>
<div style="left:47px;top:253px;width:131px;height:2px;background:#4a4a4a;"></div>
<div style="left:47px;top:276px;width:131px;height:2px;background:#4a4a4a;"></div>
<div style="left:47px;top:300px;width:131px;height:2px;background:#4a4a4a;"></div>
<div style="left:47px;top:324px;width:131px;height:2px;background:#4a4a4a;"></div>
<div style="left:47px;top:347px;width:131px;height:2px;background:#4a4a4a;"></div>
<div style="left:47px;top:371px;width:131px;height:2px;background:#4a4a4a;"></div>
<div style="left:47px;top:394px;width:131px;height:2px;background:#4a4a4a;"></div>
<div style="left:47px;top:418px;width:131px;height:2px;background:#4a4a4a;"></div>
<div style="left:47px;top:458px;width:131px;height:2px;background:#4a4a4a;"></div>
<div style="left:47px;top:517px;width:131px;height:2px;background:#4a4a4a;"></div>
<div style="left:47px;top:541px;width:131px;height:2px;background:#4a4a4a;"></div>
<div style="left:47px;top:564px;width:131px;height:2px;background:#4a4a4a;"></div>
<div style="left:47px;top:588px;width:131px;height:2px;background:#4a4a4a;"></div>
<div style="left:47px;top:612px;width:131px;height:2px;background:#4a4a4a;"></div>
<div style="left:47px;top:635px;width:131px;height:2px;background:#4a4a4a;"></div>
<div style="left:47px;top:659px;width:131px;height:2px;background:#4a4a4a;"></div>
<div style="left:47px;top:718px;width:131px;height:2px;background:#4a4a4a;"></div>
<div style="left:47px;top:741px;width:131px;height:2px;background:#4a4a4a;"></div>
<div style="left:47px;top:765px;width:131px;height:2px;background:#4a4a4a;"></div>
<div style="left:47px;top:788px;width:131px;height:2px;background:#4a4a4a;"></div>
<div style="left:47px;top:812px;width:131px;height:2px;background:#4a4a4a;"></div>
<div style="left:47px;top:836px;width:131px;height:2px;background:#4a4a4a;"></div>
<div style="left:47px;top:859px;width:131px;height:2px;background:#4a4a4a;"></div>
<div style="left:47px;top:883px;width:131px;height:2px;background:#4a4a4a;"></div>
<div style="left:47px;top:942px;width:131px;height:2px;background:#4a4a4a;"></div>
<div style="left:47px;top:1001px;width:131px;height:2px;background:#4a4a4a;"></div>
<div style="left:47px;top:1024px;width:131px;height:2px;background:#4a4a4a;"></div>
<div style="left:47px;top:1048px;width:131px;height:2px;background:#4a4a4a;"></div>
<div style="left:47px;top:1072px;width:131px;height:2px;background:#4a4a4a;"></div>
<div style="left:47px;top:1095px;width:131px;height:2px;background:#4a4a4a;"></div>
<div style="left:176px;top:205px;width:2px;height:902px;background:#4a4a4a;"></div>
<div class="t" style="left:51px;top:204.32px;font-size:15px;color:#2a2a2a;letter-spacing:-0.22px;-webkit-text-stroke:0.25px #333;">7:00 AM</div>
<div class="t" style="left:51px;top:227.94px;font-size:15px;color:#2a2a2a;letter-spacing:-0.22px;-webkit-text-stroke:0.25px #333;">7:15 AM</div>
<div class="t" style="left:51px;top:251.56px;font-size:15px;color:#2a2a2a;letter-spacing:-0.22px;-webkit-text-stroke:0.25px #333;">7:15 - 7:30 AM</div>
<div class="t" style="left:51px;top:275.18px;font-size:15px;color:#2a2a2a;letter-spacing:-0.22px;-webkit-text-stroke:0.25px #333;">8:00 - 9:00 AM</div>
<div class="t" style="left:51px;top:298.8px;font-size:15px;color:#2a2a2a;letter-spacing:-0.22px;-webkit-text-stroke:0.25px #333;">8:00 - 9:00 AM</div>
<div class="t" style="left:51px;top:322.42px;font-size:15px;color:#2a2a2a;letter-spacing:-0.22px;-webkit-text-stroke:0.25px #333;">8:00 - 8:30 AM</div>
<div class="t" style="left:51px;top:346.04px;font-size:15px;color:#2a2a2a;letter-spacing:-0.22px;-webkit-text-stroke:0.25px #333;">8:45 - 9:00 AM</div>
<div class="t" style="left:51px;top:369.66px;font-size:15px;color:#2a2a2a;letter-spacing:-0.22px;-webkit-text-stroke:0.25px #333;">9:00 - 9:50 AM</div>
<div class="t" style="left:51px;top:393.2px;font-size:15px;color:#2a2a2a;letter-spacing:-0.22px;-webkit-text-stroke:0.25px #333;">9:50 - 10:00 AM</div>
<div class="t" style="left:51px;top:634.3px;font-size:15px;color:#2a2a2a;letter-spacing:-0.22px;-webkit-text-stroke:0.25px #333;">10:50 - 11:00 AM</div>
<div class="t" style="left:51px;top:858.3px;font-size:15px;color:#2a2a2a;letter-spacing:-0.22px;-webkit-text-stroke:0.25px #333;">11:50 - 12:00 PM</div>
<div class="t" style="left:51px;top:424.6px;font-size:15px;color:#2a2a2a;letter-spacing:-0.22px;-webkit-text-stroke:0.25px #333;">10:00 - 10:50 AM</div>
<div class="t" style="left:51px;top:474.25px;font-size:15px;color:#2a2a2a;letter-spacing:-0.22px;-webkit-text-stroke:0.25px #333;">10:00 - 10:50 AM</div>
<div class="t" style="left:51px;top:516.12px;font-size:15px;color:#2a2a2a;letter-spacing:-0.22px;-webkit-text-stroke:0.25px #333;">10:00 - 10:50 AM</div>
<div class="t" style="left:51px;top:539.74px;font-size:15px;color:#2a2a2a;letter-spacing:-0.22px;-webkit-text-stroke:0.25px #333;">10:00 - 10:50 AM</div>
<div class="t" style="left:51px;top:563.36px;font-size:15px;color:#2a2a2a;letter-spacing:-0.22px;-webkit-text-stroke:0.25px #333;">10:00 - 10:50 AM</div>
<div class="t" style="left:51px;top:586.98px;font-size:15px;color:#2a2a2a;letter-spacing:-0.22px;-webkit-text-stroke:0.25px #333;">10:00 - 10:50 AM</div>
<div class="t" style="left:51px;top:610.6px;font-size:15px;color:#2a2a2a;letter-spacing:-0.22px;-webkit-text-stroke:0.25px #333;">10:00 - 10:50 AM</div>
<div class="t" style="left:51px;top:674.7px;font-size:15px;color:#2a2a2a;letter-spacing:-0.22px;-webkit-text-stroke:0.25px #333;">11:00 - 11:50 AM</div>
<div class="t" style="left:51px;top:716.52px;font-size:15px;color:#2a2a2a;letter-spacing:-0.22px;-webkit-text-stroke:0.25px #333;">11:00 - 11:50 AM</div>
<div class="t" style="left:51px;top:740.14px;font-size:15px;color:#2a2a2a;letter-spacing:-0.22px;-webkit-text-stroke:0.25px #333;">11:00 - 11:50 AM</div>
<div class="t" style="left:51px;top:763.76px;font-size:15px;color:#2a2a2a;letter-spacing:-0.22px;-webkit-text-stroke:0.25px #333;">11:00 - 11:50 AM</div>
<div class="t" style="left:51px;top:787.38px;font-size:15px;color:#2a2a2a;letter-spacing:-0.22px;-webkit-text-stroke:0.25px #333;">11:00 - 11:50 AM</div>
<div class="t" style="left:51px;top:811px;font-size:15px;color:#2a2a2a;letter-spacing:-0.22px;-webkit-text-stroke:0.25px #333;">11:00 - 11:50 AM</div>
<div class="t" style="left:51px;top:834.62px;font-size:15px;color:#2a2a2a;letter-spacing:-0.22px;-webkit-text-stroke:0.25px #333;">11:00 - 11:50 AM</div>
<div class="t" style="left:51px;top:898.7px;font-size:15px;color:#2a2a2a;letter-spacing:-0.22px;-webkit-text-stroke:0.25px #333;">12:00 - 12:50 PM</div>
<div class="t" style="left:51px;top:957.55px;font-size:15px;color:#2a2a2a;letter-spacing:-0.22px;-webkit-text-stroke:0.25px #333;">12:00 - 12:50 PM</div>
<div class="t" style="left:51px;top:999.62px;font-size:15px;color:#2a2a2a;letter-spacing:-0.22px;-webkit-text-stroke:0.25px #333;">12:00 - 12:50 PM</div>
<div class="t" style="left:51px;top:1023.24px;font-size:15px;color:#2a2a2a;letter-spacing:-0.22px;-webkit-text-stroke:0.25px #333;">12:00 - 12:50 PM</div>
<div class="t" style="left:51px;top:1046.86px;font-size:15px;color:#2a2a2a;letter-spacing:-0.22px;-webkit-text-stroke:0.25px #333;">12:00 - 12:50 PM</div>
<div class="t" style="left:51px;top:1070.48px;font-size:15px;color:#2a2a2a;letter-spacing:-0.22px;-webkit-text-stroke:0.25px #333;">12:00 - 12:50 PM</div>
<div class="t" style="left:51px;top:1094.1px;font-size:15px;color:#2a2a2a;letter-spacing:-0.22px;-webkit-text-stroke:0.25px #333;">12:00 - 12:50 PM</div>
<div class="t" style="left:180px;top:204.32px;font-size:15px;color:#2a2a2a;letter-spacing:-0.22px;-webkit-text-stroke:0.25px #333;">Staff Arrive</div>
<div class="t" style="left:180px;top:227.94px;font-size:15px;color:#2a2a2a;letter-spacing:-0.22px;-webkit-text-stroke:0.25px #333;">Volunteers Arrive</div>
<div class="t" style="left:180px;top:251.56px;font-size:15px;color:#2a2a2a;letter-spacing:-0.22px;-webkit-text-stroke:0.25px #333;">Check-In &amp; T-Shirt Setup</div>
<div class="t" style="left:180px;top:275.18px;font-size:15px;color:#2a2a2a;letter-spacing:-0.22px;-webkit-text-stroke:0.25px #333;">Registration &amp; Check-In</div>
<div class="t" style="left:180px;top:298.8px;font-size:15px;color:#2a2a2a;letter-spacing:-0.22px;-webkit-text-stroke:0.25px #333;">T-Shirts</div>
<div class="t" style="left:180px;top:322.42px;font-size:15px;color:#2a2a2a;letter-spacing:-0.22px;-webkit-text-stroke:0.25px #333;">Morning Meditation &amp; Yoga</div>
<div class="t" style="left:180px;top:346.04px;font-size:15px;color:#2a2a2a;letter-spacing:-0.22px;-webkit-text-stroke:0.25px #333;">Welcome &amp; Opening Remarks</div>
<div class="t" style="left:180px;top:369.66px;font-size:15px;color:#2a2a2a;letter-spacing:-0.22px;-webkit-text-stroke:0.25px #333;">Michigan DevFest Keynote</div>
<div class="t" style="left:180px;top:393.2px;font-size:15px;color:#2a2a2a;letter-spacing:-0.22px;-webkit-text-stroke:0.25px #333;">Break</div>
<div class="t" style="left:180px;top:424.6px;font-size:15px;color:#2a2a2a;letter-spacing:-0.22px;-webkit-text-stroke:0.25px #333;">Sessions #1 - Title</div>
<div class="t" style="left:180px;top:492.5px;font-size:15px;color:#2a2a2a;letter-spacing:-0.22px;-webkit-text-stroke:0.25px #333;">Speaker(s)</div>
<div class="t" style="left:180px;top:516.12px;font-size:15px;color:#2a2a2a;letter-spacing:-0.22px;-webkit-text-stroke:0.25px #333;">Speaker Support</div>
<div class="t" style="left:180px;top:539.74px;font-size:15px;color:#2a2a2a;letter-spacing:-0.22px;-webkit-text-stroke:0.25px #333;">Time Keeper</div>
<div class="t" style="left:180px;top:563.36px;font-size:15px;color:#2a2a2a;letter-spacing:-0.22px;-webkit-text-stroke:0.25px #333;">Q&amp;A Mic Runner</div>
<div class="t" style="left:180px;top:586.98px;font-size:15px;color:#2a2a2a;letter-spacing:-0.22px;-webkit-text-stroke:0.25px #333;">Volunteer</div>
<div class="t" style="left:180px;top:610.6px;font-size:15px;color:#2a2a2a;letter-spacing:-0.22px;-webkit-text-stroke:0.25px #333;">Volunteer</div>
<div class="t" style="left:180px;top:634.3px;font-size:15px;color:#2a2a2a;letter-spacing:-0.22px;-webkit-text-stroke:0.25px #333;">Break</div>
<div class="t" style="left:180px;top:674.7px;font-size:15px;color:#2a2a2a;letter-spacing:-0.22px;-webkit-text-stroke:0.25px #333;">Sessions #2 - Title</div>
<div class="t" style="left:180px;top:716.52px;font-size:15px;color:#2a2a2a;letter-spacing:-0.22px;-webkit-text-stroke:0.25px #333;">Speaker(s)</div>
<div class="t" style="left:180px;top:740.14px;font-size:15px;color:#2a2a2a;letter-spacing:-0.22px;-webkit-text-stroke:0.25px #333;">Speaker Support</div>
<div class="t" style="left:180px;top:763.76px;font-size:15px;color:#2a2a2a;letter-spacing:-0.22px;-webkit-text-stroke:0.25px #333;">Time Keeper</div>
<div class="t" style="left:180px;top:787.38px;font-size:15px;color:#2a2a2a;letter-spacing:-0.22px;-webkit-text-stroke:0.25px #333;">Q&amp;A Mic Runner</div>
<div class="t" style="left:180px;top:811px;font-size:15px;color:#2a2a2a;letter-spacing:-0.22px;-webkit-text-stroke:0.25px #333;">Volunteer</div>
<div class="t" style="left:180px;top:834.62px;font-size:15px;color:#2a2a2a;letter-spacing:-0.22px;-webkit-text-stroke:0.25px #333;">Volunteer</div>
<div class="t" style="left:180px;top:858.3px;font-size:15px;color:#2a2a2a;letter-spacing:-0.22px;-webkit-text-stroke:0.25px #333;">Break</div>
<div class="t" style="left:180px;top:898.7px;font-size:15px;color:#2a2a2a;letter-spacing:-0.22px;-webkit-text-stroke:0.25px #333;">Sessions #3 - Title</div>
<div class="t" style="left:180px;top:976px;font-size:15px;color:#2a2a2a;letter-spacing:-0.22px;-webkit-text-stroke:0.25px #333;">Speaker(s)</div>
<div class="t" style="left:180px;top:999.62px;font-size:15px;color:#2a2a2a;letter-spacing:-0.22px;-webkit-text-stroke:0.25px #333;">Speaker Support</div>
<div class="t" style="left:180px;top:1023.24px;font-size:15px;color:#2a2a2a;letter-spacing:-0.22px;-webkit-text-stroke:0.25px #333;">Time Keeper</div>
<div class="t" style="left:180px;top:1046.86px;font-size:15px;color:#2a2a2a;letter-spacing:-0.22px;-webkit-text-stroke:0.25px #333;">Q&amp;A Mic Runner</div>
<div class="t" style="left:180px;top:1070.48px;font-size:15px;color:#2a2a2a;letter-spacing:-0.22px;-webkit-text-stroke:0.25px #333;">Volunteer</div>
<div class="t" style="left:180px;top:1094.1px;font-size:15px;color:#2a2a2a;letter-spacing:-0.22px;-webkit-text-stroke:0.25px #333;">Volunteer</div>
<div class="t" style="left:-355.5px;top:251.56px;width:2000px;text-align:center;font-size:15px;color:#2a2a2a;letter-spacing:-0.22px;-webkit-text-stroke:0.25px #333;">Sumia Saleh</div>
<div class="t" style="left:-355.5px;top:275.18px;width:2000px;text-align:center;font-size:15px;color:#2a2a2a;letter-spacing:-0.22px;-webkit-text-stroke:0.25px #333;">Sumia Saleh</div>
<div class="t" style="left:-355.5px;top:298.8px;width:2000px;text-align:center;font-size:15px;color:#2a2a2a;letter-spacing:-0.22px;-webkit-text-stroke:0.25px #333;">Sumia Saleh</div>
<div class="t" style="left:-355.5px;top:322.42px;width:2000px;text-align:center;font-size:15px;color:#2a2a2a;letter-spacing:-0.22px;-webkit-text-stroke:0.25px #333;">Sumia Saleh</div>
<div class="t" style="left:-355.5px;top:346.04px;width:2000px;text-align:center;font-size:15px;color:#2a2a2a;letter-spacing:-0.22px;-webkit-text-stroke:0.25px #333;">Sumia Saleh</div>
<div class="t" style="left:-355.5px;top:369.66px;width:2000px;text-align:center;font-size:15px;color:#2a2a2a;letter-spacing:-0.22px;-webkit-text-stroke:0.25px #333;">Sumia Saleh</div>
<div class="t" style="left:769px;top:251.56px;font-size:15px;color:#2a2a2a;letter-spacing:-0.22px;-webkit-text-stroke:0.25px #333;">Jorge Lopez - SHPE</div>
<div class="t" style="left:1000px;top:251.56px;font-size:15px;color:#2a2a2a;letter-spacing:-0.22px;-webkit-text-stroke:0.25px #333;">Liliana Blancas - SHPE</div>
<div class="t" style="left:1245px;top:251.56px;font-size:15px;color:#2a2a2a;letter-spacing:-0.22px;-webkit-text-stroke:0.25px #333;">Jordan Mazaira - SHPE</div>
<div class="t" style="left:769px;top:275.18px;font-size:15px;color:#2a2a2a;letter-spacing:-0.22px;-webkit-text-stroke:0.25px #333;">Eddie Martinez-Lopez - SHPE</div>
<div class="t" style="left:1000px;top:275.18px;font-size:15px;color:#2a2a2a;letter-spacing:-0.22px;-webkit-text-stroke:0.25px #333;">Edgar Figueroa - SHPE</div>
<div class="t" style="left:1245px;top:275.18px;font-size:15px;color:#2a2a2a;letter-spacing:-0.22px;-webkit-text-stroke:0.25px #333;">Julissa Hernandez Romero - SHPE</div>
<div class="t" style="left:769px;top:298.8px;font-size:15px;color:#2a2a2a;letter-spacing:-0.22px;-webkit-text-stroke:0.25px #333;">Raquel Estrada - SHPE</div>
<div class="t" style="left:1000px;top:298.8px;font-size:15px;color:#2a2a2a;letter-spacing:-0.22px;-webkit-text-stroke:0.25px #333;">Raquel Estrada - SHPE</div>
<div class="t" style="left:1245px;top:298.8px;font-size:15px;color:#2a2a2a;letter-spacing:-0.22px;-webkit-text-stroke:0.25px #333;">Raquel Estrada - SHPE</div>
<div class="t" style="left:-355.5px;top:416.05px;width:2000px;text-align:center;font-size:15px;color:#2a2a2a;letter-spacing:-0.22px;-webkit-text-stroke:0.25px #333;">Practical AI: Within SRE, Delivery</div>
<div class="t" style="left:-355.5px;top:433.15px;width:2000px;text-align:center;font-size:15px;color:#2a2a2a;letter-spacing:-0.22px;-webkit-text-stroke:0.25px #333;">and Cloud Engineering</div>
<div class="t" style="left:-119.5px;top:416.7px;width:2000px;text-align:center;font-size:15px;color:#2a2a2a;letter-spacing:-0.22px;-webkit-text-stroke:0.25px #333;">Blood, Sweat, Code Reviews</div>
<div class="t" style="left:118.5px;top:416.05px;width:2000px;text-align:center;font-size:15px;color:#2a2a2a;letter-spacing:-0.22px;-webkit-text-stroke:0.25px #333;">Robotics in the Age of Generative</div>
<div class="t" style="left:118.5px;top:433.15px;width:2000px;text-align:center;font-size:15px;color:#2a2a2a;letter-spacing:-0.22px;-webkit-text-stroke:0.25px #333;">AI</div>
<div class="t" style="left:360.25px;top:416.05px;width:2000px;text-align:center;font-size:15px;color:#2a2a2a;letter-spacing:-0.22px;-webkit-text-stroke:0.25px #333;">Strategies &amp; tips for growing your</div>
<div class="t" style="left:360.25px;top:433.15px;width:2000px;text-align:center;font-size:15px;color:#2a2a2a;letter-spacing:-0.22px;-webkit-text-stroke:0.25px #333;">career</div>
<div class="t" style="left:602.75px;top:416.7px;width:2000px;text-align:center;font-size:15px;color:#2a2a2a;letter-spacing:-0.22px;-webkit-text-stroke:0.25px #333;">Women Shaping the Future Panel</div>
<div class="t" style="left:854.5px;top:416.05px;width:2000px;text-align:center;font-size:15px;color:#2a2a2a;letter-spacing:-0.22px;-webkit-text-stroke:0.25px #333;">Getting started with Microcontrollers</div>
<div class="t" style="left:854.5px;top:433.15px;width:2000px;text-align:center;font-size:15px;color:#2a2a2a;letter-spacing:-0.22px;-webkit-text-stroke:0.25px #333;">and Sensors</div>
<div class="t" style="left:-355.5px;top:474.25px;width:2000px;text-align:center;font-size:15px;color:#2a2a2a;letter-spacing:-0.22px;-webkit-text-stroke:0.25px #333;">Joel Vasallo</div>
<div class="t" style="left:-119.5px;top:474.25px;width:2000px;text-align:center;font-size:15px;color:#2a2a2a;letter-spacing:-0.22px;-webkit-text-stroke:0.25px #333;">David Giard</div>
<div class="t" style="left:118.5px;top:474.25px;width:2000px;text-align:center;font-size:15px;color:#2a2a2a;letter-spacing:-0.22px;-webkit-text-stroke:0.25px #333;">Hafeez Jimoh</div>
<div class="t" style="left:360.25px;top:474.25px;width:2000px;text-align:center;font-size:15px;color:#2a2a2a;letter-spacing:-0.22px;-webkit-text-stroke:0.25px #333;">Dave Koziol</div>
<div class="t" style="left:602.75px;top:457.15px;width:2000px;text-align:center;font-size:15px;color:#2a2a2a;letter-spacing:-0.22px;-webkit-text-stroke:0.25px #333;">Cynthia Respert, Stephaine Frantz,</div>
<div class="t" style="left:602.75px;top:474.25px;width:2000px;text-align:center;font-size:15px;color:#2a2a2a;letter-spacing:-0.22px;-webkit-text-stroke:0.25px #333;">Jeseekia Vaughn, W.E. Da&#x27; Cruz,</div>
<div class="t" style="left:602.75px;top:491.35px;width:2000px;text-align:center;font-size:15px;color:#2a2a2a;letter-spacing:-0.22px;-webkit-text-stroke:0.25px #333;">Bandhan Kaur</div>
<div class="t" style="left:854.5px;top:474.25px;width:2000px;text-align:center;font-size:15px;color:#2a2a2a;letter-spacing:-0.22px;-webkit-text-stroke:0.25px #333;">W. Scott Richardson</div>
<div class="t" style="left:-355.5px;top:516.12px;width:2000px;text-align:center;font-size:15px;color:#2a2a2a;letter-spacing:-0.22px;-webkit-text-stroke:0.25px #333;">Rishi</div>
<div class="t" style="left:769px;top:516.12px;font-size:15px;color:#2a2a2a;letter-spacing:-0.22px;-webkit-text-stroke:0.25px #333;">Angie Moore</div>
<div class="t" style="left:360.25px;top:516.12px;width:2000px;text-align:center;font-size:15px;color:#2a2a2a;letter-spacing:-0.22px;-webkit-text-stroke:0.25px #333;">Hernando Gonzalez</div>
<div class="t" style="left:602.75px;top:516.12px;width:2000px;text-align:center;font-size:15px;color:#2a2a2a;letter-spacing:-0.22px;-webkit-text-stroke:0.25px #333;">Husniyah Alam</div>
<div class="t" style="left:854.5px;top:516.12px;width:2000px;text-align:center;font-size:15px;color:#2a2a2a;letter-spacing:-0.22px;-webkit-text-stroke:0.25px #333;">Tyler McBeath</div>
<div class="t" style="left:-355.5px;top:539.74px;width:2000px;text-align:center;font-size:15px;color:#2a2a2a;letter-spacing:-0.22px;-webkit-text-stroke:0.25px #333;">Sumia Saleh</div>
<div class="t" style="left:769px;top:539.74px;font-size:15px;color:#2a2a2a;letter-spacing:-0.22px;-webkit-text-stroke:0.25px #333;">Angie Moore</div>
<div class="t" style="left:360.25px;top:539.74px;width:2000px;text-align:center;font-size:15px;color:#2a2a2a;letter-spacing:-0.22px;-webkit-text-stroke:0.25px #333;">Hernando Gonzalez</div>
<div class="t" style="left:854.5px;top:586.98px;width:2000px;text-align:center;font-size:15px;color:#2a2a2a;letter-spacing:-0.22px;-webkit-text-stroke:0.25px #333;">Jamal Longwood</div>
<div class="t" style="left:-355.5px;top:665.45px;width:2000px;text-align:center;font-size:15px;color:#2a2a2a;letter-spacing:-0.22px;-webkit-text-stroke:0.25px #333;">The Universal Adapter: Building</div>
<div class="t" style="left:-355.5px;top:683.95px;width:2000px;text-align:center;font-size:15px;color:#2a2a2a;letter-spacing:-0.22px;-webkit-text-stroke:0.25px #333;">and Scaling MCP Servers</div>
<div class="t" style="left:769px;top:657.6px;font-size:15px;color:#2a2a2a;letter-spacing:-0.22px;-webkit-text-stroke:0.25px #333;">Building Your First AI Tool Server</div>
<div class="t" style="left:769px;top:674.7px;font-size:15px;color:#2a2a2a;letter-spacing:-0.22px;-webkit-text-stroke:0.25px #333;">with Firebase Auth &amp; Cloud</div>
<div class="t" style="left:769px;top:691.8px;font-size:15px;color:#2a2a2a;letter-spacing:-0.22px;-webkit-text-stroke:0.25px #333;">Functions</div>
<div class="t" style="left:118.5px;top:657.8px;width:2000px;text-align:center;font-size:15px;color:#2a2a2a;letter-spacing:-0.22px;-webkit-text-stroke:0.25px #333;">The Ethics of Voice &amp; Storytelling:</div>
<div class="t" style="left:118.5px;top:674.9px;width:2000px;text-align:center;font-size:15px;color:#2a2a2a;letter-spacing:-0.22px;-webkit-text-stroke:0.25px #333;">Who Gets Heard in the Age of AI</div>
<div class="t" style="left:360.25px;top:657.6px;width:2000px;text-align:center;font-size:15px;color:#2a2a2a;letter-spacing:-0.22px;-webkit-text-stroke:0.25px #333;">FORGET YOUR GRAND DAD:</div>
<div class="t" style="left:360.25px;top:674.7px;width:2000px;text-align:center;font-size:15px;color:#2a2a2a;letter-spacing:-0.22px;-webkit-text-stroke:0.25px #333;">ADOPT THE NEXT-GEN</div>
<div class="t" style="left:360.25px;top:691.8px;width:2000px;text-align:center;font-size:15px;color:#2a2a2a;letter-spacing:-0.22px;-webkit-text-stroke:0.25px #333;">EXECUTIVE PLAYBOOK</div>
<div class="t" style="left:602.75px;top:657.6px;width:2000px;text-align:center;font-size:15px;color:#2a2a2a;letter-spacing:-0.22px;-webkit-text-stroke:0.25px #333;">Designing for the Mind: Bridging</div>
<div class="t" style="left:602.75px;top:674.7px;width:2000px;text-align:center;font-size:15px;color:#2a2a2a;letter-spacing:-0.22px;-webkit-text-stroke:0.25px #333;">Human Experience and Emerging</div>
<div class="t" style="left:602.75px;top:691.8px;width:2000px;text-align:center;font-size:15px;color:#2a2a2a;letter-spacing:-0.22px;-webkit-text-stroke:0.25px #333;">Technologies</div>
<div class="t" style="left:854.5px;top:657.8px;width:2000px;text-align:center;font-size:15px;color:#2a2a2a;letter-spacing:-0.22px;-webkit-text-stroke:0.25px #333;">GDE AI WORKSHOP Building AI</div>
<div class="t" style="left:854.5px;top:674.9px;width:2000px;text-align:center;font-size:15px;color:#2a2a2a;letter-spacing:-0.22px;-webkit-text-stroke:0.25px #333;">Agents with Vertex AI Agent Builder</div>
<div class="t" style="left:-355.5px;top:716.52px;width:2000px;text-align:center;font-size:15px;color:#2a2a2a;letter-spacing:-0.22px;-webkit-text-stroke:0.25px #333;">Stephen Wylie</div>
<div class="t" style="left:-119.5px;top:716.52px;width:2000px;text-align:center;font-size:15px;color:#2a2a2a;letter-spacing:-0.22px;-webkit-text-stroke:0.25px #333;">Alex Patterson</div>
<div class="t" style="left:118.5px;top:716.52px;width:2000px;text-align:center;font-size:15px;color:#2a2a2a;letter-spacing:-0.22px;-webkit-text-stroke:0.25px #333;">Michael Bower</div>
<div class="t" style="left:360.25px;top:716.52px;width:2000px;text-align:center;font-size:15px;color:#2a2a2a;letter-spacing:-0.22px;-webkit-text-stroke:0.25px #333;">Ida Byrd-Hill</div>
<div class="t" style="left:602.75px;top:716.52px;width:2000px;text-align:center;font-size:15px;color:#2a2a2a;letter-spacing:-0.22px;-webkit-text-stroke:0.25px #333;">Hoda Solati and Shima Solati</div>
<div class="t" style="left:854.5px;top:716.52px;width:2000px;text-align:center;font-size:15px;color:#2a2a2a;letter-spacing:-0.22px;-webkit-text-stroke:0.25px #333;">JC Escalante</div>
<div class="t" style="left:-355.5px;top:740.14px;width:2000px;text-align:center;font-size:15px;color:#2a2a2a;letter-spacing:-0.22px;-webkit-text-stroke:0.25px #333;">Rishi</div>
<div class="t" style="left:769px;top:740.14px;font-size:15px;color:#2a2a2a;letter-spacing:-0.22px;-webkit-text-stroke:0.25px #333;">Angie Moore</div>
<div class="t" style="left:360.25px;top:740.14px;width:2000px;text-align:center;font-size:15px;color:#2a2a2a;letter-spacing:-0.22px;-webkit-text-stroke:0.25px #333;">Jana Hazimeh</div>
<div class="t" style="left:602.75px;top:740.14px;width:2000px;text-align:center;font-size:15px;color:#2a2a2a;letter-spacing:-0.22px;-webkit-text-stroke:0.25px #333;">Hernando Gonzalez</div>
<div class="t" style="left:854.5px;top:740.14px;width:2000px;text-align:center;font-size:15px;color:#2a2a2a;letter-spacing:-0.22px;-webkit-text-stroke:0.25px #333;">Tyler McBeath</div>
<div class="t" style="left:769px;top:763.76px;font-size:15px;color:#2a2a2a;letter-spacing:-0.22px;-webkit-text-stroke:0.25px #333;">Angie Moore</div>
<div class="t" style="left:602.75px;top:763.76px;width:2000px;text-align:center;font-size:15px;color:#2a2a2a;letter-spacing:-0.22px;-webkit-text-stroke:0.25px #333;">Husniyah Alam</div>
<div class="t" style="left:-355.5px;top:898.7px;width:2000px;text-align:center;font-size:15px;color:#2a2a2a;letter-spacing:-0.22px;-webkit-text-stroke:0.25px #333;">From Data Gaps to Data Gold</div>
<div class="t" style="left:-119.5px;top:889.55px;width:2000px;text-align:center;font-size:15px;color:#2a2a2a;letter-spacing:-0.22px;-webkit-text-stroke:0.25px #333;">Know Your JS: SBOMs for</div>
<div class="t" style="left:-119.5px;top:907.85px;width:2000px;text-align:center;font-size:15px;color:#2a2a2a;letter-spacing:-0.22px;-webkit-text-stroke:0.25px #333;">Frontend Devs</div>
<div class="t" style="left:118.5px;top:889.6px;width:2000px;text-align:center;font-size:15px;color:#2a2a2a;letter-spacing:-0.22px;-webkit-text-stroke:0.25px #333;">Car Hacking For Android</div>
<div class="t" style="left:118.5px;top:907.8px;width:2000px;text-align:center;font-size:15px;color:#2a2a2a;letter-spacing:-0.22px;-webkit-text-stroke:0.25px #333;">Enthusiasts</div>
<div class="t" style="left:360.25px;top:881.6px;width:2000px;text-align:center;font-size:15px;color:#2a2a2a;letter-spacing:-0.22px;-webkit-text-stroke:0.25px #333;">Beneath the Armor: The Cost of</div>
<div class="t" style="left:360.25px;top:898.7px;width:2000px;text-align:center;font-size:15px;color:#2a2a2a;letter-spacing:-0.22px;-webkit-text-stroke:0.25px #333;">Emotional Suppression in Tech</div>
<div class="t" style="left:360.25px;top:915.8px;width:2000px;text-align:center;font-size:15px;color:#2a2a2a;letter-spacing:-0.22px;-webkit-text-stroke:0.25px #333;">Leadership</div>
<div class="t" style="left:602.75px;top:881.6px;width:2000px;text-align:center;font-size:15px;color:#2a2a2a;letter-spacing:-0.22px;-webkit-text-stroke:0.25px #333;">Leading Through Change: Hispanic</div>
<div class="t" style="left:602.75px;top:898.7px;width:2000px;text-align:center;font-size:15px;color:#2a2a2a;letter-spacing:-0.22px;-webkit-text-stroke:0.25px #333;">&amp; Black Engineers Shaping the</div>
<div class="t" style="left:602.75px;top:915.8px;width:2000px;text-align:center;font-size:15px;color:#2a2a2a;letter-spacing:-0.22px;-webkit-text-stroke:0.25px #333;">Future of STEM</div>
<div class="t" style="left:854.5px;top:889.5px;width:2000px;text-align:center;font-size:15px;color:#2a2a2a;letter-spacing:-0.22px;-webkit-text-stroke:0.25px #333;">GDE AI WORKSHOP Building AI</div>
<div class="t" style="left:854.5px;top:907.9px;width:2000px;text-align:center;font-size:15px;color:#2a2a2a;letter-spacing:-0.22px;-webkit-text-stroke:0.25px #333;">Agents with Vertex AI Agent Builder</div>
<div class="t" style="left:-355.5px;top:957.55px;width:2000px;text-align:center;font-size:15px;color:#2a2a2a;letter-spacing:-0.22px;-webkit-text-stroke:0.25px #333;">Adonai Vera</div>
<div class="t" style="left:-119.5px;top:957.55px;width:2000px;text-align:center;font-size:15px;color:#2a2a2a;letter-spacing:-0.22px;-webkit-text-stroke:0.25px #333;">Chris DeMars</div>
<div class="t" style="left:118.5px;top:957.55px;width:2000px;text-align:center;font-size:15px;color:#2a2a2a;letter-spacing:-0.22px;-webkit-text-stroke:0.25px #333;">Shams Ahson</div>
<div class="t" style="left:360.25px;top:957.55px;width:2000px;text-align:center;font-size:15px;color:#2a2a2a;letter-spacing:-0.22px;-webkit-text-stroke:0.25px #333;">Bernadette Atanga, MD</div>
<div class="t" style="left:602.75px;top:940.45px;width:2000px;text-align:center;font-size:15px;color:#2a2a2a;letter-spacing:-0.22px;-webkit-text-stroke:0.25px #333;">Martez Coleman, Trivia Barnes,</div>
<div class="t" style="left:602.75px;top:957.55px;width:2000px;text-align:center;font-size:15px;color:#2a2a2a;letter-spacing:-0.22px;-webkit-text-stroke:0.25px #333;">Angel Porras, Erik Blancas, Raquel</div>
<div class="t" style="left:602.75px;top:974.65px;width:2000px;text-align:center;font-size:15px;color:#2a2a2a;letter-spacing:-0.22px;-webkit-text-stroke:0.25px #333;">Estradas, Maridy Mazaira</div>
<div class="t" style="left:854.5px;top:957.55px;width:2000px;text-align:center;font-size:15px;color:#2a2a2a;letter-spacing:-0.22px;-webkit-text-stroke:0.25px #333;">JC Escalante</div>
<div class="t" style="left:769px;top:999.62px;font-size:15px;color:#2a2a2a;letter-spacing:-0.22px;-webkit-text-stroke:0.25px #333;">Angie Moore</div>
<div class="t" style="left:118.5px;top:999.62px;width:2000px;text-align:center;font-size:15px;color:#2a2a2a;letter-spacing:-0.22px;-webkit-text-stroke:0.25px #333;">Sumia Saleh</div>
<div class="t" style="left:360.25px;top:999.62px;width:2000px;text-align:center;font-size:15px;color:#2a2a2a;letter-spacing:-0.22px;-webkit-text-stroke:0.25px #333;">Jana Hazimeh</div>
<div class="t" style="left:602.75px;top:999.62px;width:2000px;text-align:center;font-size:15px;color:#2a2a2a;letter-spacing:-0.22px;-webkit-text-stroke:0.25px #333;">Husniyah Alam</div>
<div class="t" style="left:854.5px;top:999.62px;width:2000px;text-align:center;font-size:15px;color:#2a2a2a;letter-spacing:-0.22px;-webkit-text-stroke:0.25px #333;">Rehenashri Rastapuramata</div>
<div class="t" style="left:769px;top:1023.24px;font-size:15px;color:#2a2a2a;letter-spacing:-0.22px;-webkit-text-stroke:0.25px #333;">Angie Moore</div>
<div class="t" style="left:118.5px;top:1023.24px;width:2000px;text-align:center;font-size:15px;color:#2a2a2a;letter-spacing:-0.22px;-webkit-text-stroke:0.25px #333;">Rishi</div>
<div class="t" style="left:602.75px;top:1023.24px;width:2000px;text-align:center;font-size:15px;color:#2a2a2a;letter-spacing:-0.22px;-webkit-text-stroke:0.25px #333;">SHPE Volunteer 2</div>
<div class="t" style="left:602.75px;top:1046.86px;width:2000px;text-align:center;font-size:15px;color:#2a2a2a;letter-spacing:-0.22px;-webkit-text-stroke:0.25px #333;">Tyler McBeath</div>
<div class="t" style="left:602.75px;top:1070.48px;width:2000px;text-align:center;font-size:15px;color:#2a2a2a;letter-spacing:-0.22px;-webkit-text-stroke:0.25px #333;">SHPE Volunteer 1</div>
<div class="t" style="left:602.75px;top:1094.1px;width:2000px;text-align:center;font-size:15px;color:#2a2a2a;letter-spacing:-0.22px;-webkit-text-stroke:0.25px #333;">Jamal Longwood</div>
<div class="t" style="left:51px;top:181.25px;font-size:14px;color:#1f1f1f;font-weight:bold;letter-spacing:0.25px;">TIME</div>
<svg style="left:157px;top:191.3px" width="14" height="10" viewBox="0 0 14 10"><path d="M0.5 1.2h13M3 4.6h8M5.5 8h3" stroke="#667d6f" stroke-width="1.5"/></svg>
<div class="t" style="left:180px;top:181.25px;font-size:14px;color:#1f1f1f;font-weight:bold;letter-spacing:0.25px;">TASK</div>
<svg style="left:505px;top:191.3px" width="14" height="10" viewBox="0 0 14 10"><path d="M0.5 1.2h13M3 4.6h8M5.5 8h3" stroke="#667d6f" stroke-width="1.5"/></svg>
<div class="t" style="left:-365.5px;top:181.25px;width:2000px;text-align:center;font-size:14px;color:#1f1f1f;font-weight:bold;letter-spacing:0.25px;">BUILD WITH AI</div>
<svg style="left:746px;top:191.3px" width="14" height="10" viewBox="0 0 14 10"><path d="M0.5 1.2h13M3 4.6h8M5.5 8h3" stroke="#667d6f" stroke-width="1.5"/></svg>
<div class="t" style="left:-129.5px;top:181.25px;width:2000px;text-align:center;font-size:14px;color:#1f1f1f;font-weight:bold;letter-spacing:0.25px;">TECH+DESIGN</div>
<svg style="left:977px;top:191.3px" width="14" height="10" viewBox="0 0 14 10"><path d="M0.5 1.2h13M3 4.6h8M5.5 8h3" stroke="#667d6f" stroke-width="1.5"/></svg>
<div class="t" style="left:108.5px;top:181.25px;width:2000px;text-align:center;font-size:14px;color:#1f1f1f;font-weight:bold;letter-spacing:0.25px;">INNOVATION</div>
<svg style="left:1222px;top:191.3px" width="14" height="10" viewBox="0 0 14 10"><path d="M0.5 1.2h13M3 4.6h8M5.5 8h3" stroke="#667d6f" stroke-width="1.5"/></svg>
<div class="t" style="left:350.25px;top:181.25px;width:2000px;text-align:center;font-size:14px;color:#1f1f1f;font-weight:bold;letter-spacing:0.25px;">LEVEL UP</div>
<svg style="left:1460.5px;top:191.3px" width="14" height="10" viewBox="0 0 14 10"><path d="M0.5 1.2h13M3 4.6h8M5.5 8h3" stroke="#667d6f" stroke-width="1.5"/></svg>
<div class="t" style="left:592.75px;top:181.25px;width:2000px;text-align:center;font-size:14px;color:#1f1f1f;font-weight:bold;letter-spacing:0.25px;">STARTUP</div>
<svg style="left:1707px;top:191.3px" width="14" height="10" viewBox="0 0 14 10"><path d="M0.5 1.2h13M3 4.6h8M5.5 8h3" stroke="#667d6f" stroke-width="1.5"/></svg>
<div class="t" style="left:844.5px;top:181.25px;width:2000px;text-align:center;font-size:14px;color:#1f1f1f;font-weight:bold;letter-spacing:0.25px;">WORKSHOPS</div>
<svg style="left:1964px;top:191.3px" width="14" height="10" viewBox="0 0 14 10"><path d="M0.5 1.2h13M3 4.6h8M5.5 8h3" stroke="#667d6f" stroke-width="1.5"/></svg>
<svg style="left:2140px;top:191.3px" width="14" height="10" viewBox="0 0 14 10"><path d="M0.5 1.2h13M3 4.6h8M5.5 8h3" stroke="#667d6f" stroke-width="1.5"/></svg>
<svg style="left:2300px;top:191.3px" width="14" height="10" viewBox="0 0 14 10"><path d="M0.5 1.2h13M3 4.6h8M5.5 8h3" stroke="#667d6f" stroke-width="1.5"/></svg>
<svg style="left:2475.5px;top:191.3px" width="14" height="10" viewBox="0 0 14 10"><path d="M0.5 1.2h13M3 4.6h8M5.5 8h3" stroke="#667d6f" stroke-width="1.5"/></svg>
<div style="left:47px;top:183px;width:2459px;height:1px;background:rgba(0,0,0,0.12);"></div>
<div style="left:47px;top:276px;width:2459px;height:2px;background:#86a7d8;"></div>
<div style="left:47px;top:300px;width:2459px;height:2px;background:#5f88cc;"></div>
<div style="left:46px;top:158px;width:2460px;height:25px;background:#d3f2d4;"></div>
<div class="t" style="left:-888.5px;top:155.69px;width:2000px;text-align:center;font-size:11px;color:#3c4043;font-weight:bold;">A</div>
<div class="t" style="left:-650px;top:155.69px;width:2000px;text-align:center;font-size:11px;color:#3c4043;font-weight:bold;">B</div>
<div class="t" style="left:-355.5px;top:155.69px;width:2000px;text-align:center;font-size:11px;color:#3c4043;font-weight:bold;">C</div>
<div class="t" style="left:-119.5px;top:155.69px;width:2000px;text-align:center;font-size:11px;color:#3c4043;font-weight:bold;">D</div>
<div class="t" style="left:118.5px;top:155.69px;width:2000px;text-align:center;font-size:11px;color:#3c4043;font-weight:bold;">E</div>
<div class="t" style="left:360.25px;top:155.69px;width:2000px;text-align:center;font-size:11px;color:#3c4043;font-weight:bold;">F</div>
<div class="t" style="left:602.75px;top:155.69px;width:2000px;text-align:center;font-size:11px;color:#3c4043;font-weight:bold;">G</div>
<div class="t" style="left:854.5px;top:155.69px;width:2000px;text-align:center;font-size:11px;color:#3c4043;font-weight:bold;">H</div>
<div class="t" style="left:1071px;top:155.69px;width:2000px;text-align:center;font-size:11px;color:#3c4043;font-weight:bold;">I</div>
<div class="t" style="left:1239px;top:155.69px;width:2000px;text-align:center;font-size:11px;color:#3c4043;font-weight:bold;">J</div>
<div class="t" style="left:1406.75px;top:155.69px;width:2000px;text-align:center;font-size:11px;color:#3c4043;font-weight:bold;">K</div>
<div style="left:46px;top:158px;width:2px;height:25px;background:rgba(0,0,0,0.10);"></div>
<div style="left:176px;top:158px;width:1px;height:25px;background:rgba(0,0,0,0.10);"></div>
<div style="left:524px;top:158px;width:1px;height:25px;background:rgba(0,0,0,0.10);"></div>
<div style="left:764px;top:158px;width:2px;height:25px;background:rgba(0,0,0,0.10);"></div>
<div style="left:996px;top:158px;width:1px;height:25px;background:rgba(0,0,0,0.10);"></div>
<div style="left:1240px;top:158px;width:2px;height:25px;background:rgba(0,0,0,0.10);"></div>
<div style="left:1479px;top:158px;width:1px;height:25px;background:rgba(0,0,0,0.10);"></div>
<div style="left:1726px;top:158px;width:1px;height:25px;background:rgba(0,0,0,0.10);"></div>
<div style="left:1982px;top:158px;width:2px;height:25px;background:rgba(0,0,0,0.10);"></div>
<div style="left:2158px;top:158px;width:2px;height:25px;background:rgba(0,0,0,0.10);"></div>
<div style="left:2318px;top:158px;width:2px;height:25px;background:rgba(0,0,0,0.10);"></div>
<div style="left:2494px;top:158px;width:1px;height:25px;background:rgba(0,0,0,0.10);"></div>
<div style="left:2505px;top:158px;width:1px;height:25px;background:rgba(0,0,0,0.10);"></div>
<div style="left:0px;top:156px;width:2519px;height:2px;background:#d4d6d8;"></div>
<div style="left:46px;top:183px;width:2460px;height:1px;background:rgba(0,0,0,0.15);"></div>
<div style="left:0px;top:183px;width:46px;height:924px;background:#e9f6ec;"></div>
<div class="t" style="left:-979px;top:180.02px;width:2000px;text-align:center;font-size:12.5px;color:#5f6660;transform:scaleX(0.87);">1</div>
<div style="left:0px;top:206px;width:46px;height:1px;background:rgba(0,0,0,0.10);"></div>
<div class="t" style="left:-979px;top:203.38px;width:2000px;text-align:center;font-size:12.5px;color:#5f6660;transform:scaleX(0.87);">2</div>
<div style="left:0px;top:230px;width:46px;height:1px;background:rgba(0,0,0,0.10);"></div>
<div class="t" style="left:-979px;top:227px;width:2000px;text-align:center;font-size:12.5px;color:#5f6660;transform:scaleX(0.87);">3</div>
<div style="left:0px;top:253px;width:46px;height:1px;background:rgba(0,0,0,0.10);"></div>
<div class="t" style="left:-979px;top:250.62px;width:2000px;text-align:center;font-size:12.5px;color:#5f6660;transform:scaleX(0.87);">4</div>
<div style="left:0px;top:277px;width:46px;height:1px;background:rgba(0,0,0,0.10);"></div>
<div style="left:0px;top:277px;width:46px;height:24px;background:#2e7d3e;"></div>
<div class="t" style="left:-979px;top:274.24px;width:2000px;text-align:center;font-size:12.5px;color:#ffffff;font-weight:bold;transform:scaleX(0.87);">5</div>
<div style="left:0px;top:300px;width:46px;height:1px;background:rgba(0,0,0,0.10);"></div>
<div class="t" style="left:-979px;top:297.86px;width:2000px;text-align:center;font-size:12.5px;color:#5f6660;transform:scaleX(0.87);">6</div>
<div style="left:0px;top:324px;width:46px;height:1px;background:rgba(0,0,0,0.10);"></div>
<div class="t" style="left:-979px;top:321.48px;width:2000px;text-align:center;font-size:12.5px;color:#5f6660;transform:scaleX(0.87);">7</div>
<div style="left:0px;top:348px;width:46px;height:1px;background:rgba(0,0,0,0.10);"></div>
<div class="t" style="left:-979px;top:345.1px;width:2000px;text-align:center;font-size:12.5px;color:#5f6660;transform:scaleX(0.87);">8</div>
<div style="left:0px;top:371px;width:46px;height:1px;background:rgba(0,0,0,0.10);"></div>
<div class="t" style="left:-979px;top:368.72px;width:2000px;text-align:center;font-size:12.5px;color:#5f6660;transform:scaleX(0.87);">9</div>
<div style="left:0px;top:395px;width:46px;height:1px;background:rgba(0,0,0,0.10);"></div>
<div class="t" style="left:-979px;top:392.3px;width:2000px;text-align:center;font-size:12.5px;color:#5f6660;transform:scaleX(0.87);">10</div>
<div style="left:0px;top:418px;width:46px;height:1px;background:rgba(0,0,0,0.10);"></div>
<div class="t" style="left:-979px;top:424.37px;width:2000px;text-align:center;font-size:12.5px;color:#5f6660;transform:scaleX(0.87);">11</div>
<div style="left:0px;top:459px;width:46px;height:1px;background:rgba(0,0,0,0.10);"></div>
<div class="t" style="left:-979px;top:474.02px;width:2000px;text-align:center;font-size:12.5px;color:#5f6660;transform:scaleX(0.87);">12</div>
<div style="left:0px;top:518px;width:46px;height:1px;background:rgba(0,0,0,0.10);"></div>
<div class="t" style="left:-979px;top:515.18px;width:2000px;text-align:center;font-size:12.5px;color:#5f6660;transform:scaleX(0.87);">13</div>
<div style="left:0px;top:541px;width:46px;height:1px;background:rgba(0,0,0,0.10);"></div>
<div class="t" style="left:-979px;top:538.8px;width:2000px;text-align:center;font-size:12.5px;color:#5f6660;transform:scaleX(0.87);">14</div>
<div style="left:0px;top:565px;width:46px;height:1px;background:rgba(0,0,0,0.10);"></div>
<div class="t" style="left:-979px;top:562.42px;width:2000px;text-align:center;font-size:12.5px;color:#5f6660;transform:scaleX(0.87);">15</div>
<div style="left:0px;top:589px;width:46px;height:1px;background:rgba(0,0,0,0.10);"></div>
<div class="t" style="left:-979px;top:586.04px;width:2000px;text-align:center;font-size:12.5px;color:#5f6660;transform:scaleX(0.87);">16</div>
<div style="left:0px;top:612px;width:46px;height:1px;background:rgba(0,0,0,0.10);"></div>
<div class="t" style="left:-979px;top:609.66px;width:2000px;text-align:center;font-size:12.5px;color:#5f6660;transform:scaleX(0.87);">17</div>
<div style="left:0px;top:636px;width:46px;height:1px;background:rgba(0,0,0,0.10);"></div>
<div class="t" style="left:-979px;top:633.32px;width:2000px;text-align:center;font-size:12.5px;color:#5f6660;transform:scaleX(0.87);">18</div>
<div style="left:0px;top:660px;width:46px;height:1px;background:rgba(0,0,0,0.10);"></div>
<div class="t" style="left:-979px;top:674.47px;width:2000px;text-align:center;font-size:12.5px;color:#5f6660;transform:scaleX(0.87);">19</div>
<div style="left:0px;top:718px;width:46px;height:1px;background:rgba(0,0,0,0.10);"></div>
<div class="t" style="left:-979px;top:715.58px;width:2000px;text-align:center;font-size:12.5px;color:#5f6660;transform:scaleX(0.87);">20</div>
<div style="left:0px;top:742px;width:46px;height:1px;background:rgba(0,0,0,0.10);"></div>
<div class="t" style="left:-979px;top:739.2px;width:2000px;text-align:center;font-size:12.5px;color:#5f6660;transform:scaleX(0.87);">21</div>
<div style="left:0px;top:765px;width:46px;height:1px;background:rgba(0,0,0,0.10);"></div>
<div class="t" style="left:-979px;top:762.82px;width:2000px;text-align:center;font-size:12.5px;color:#5f6660;transform:scaleX(0.87);">22</div>
<div style="left:0px;top:789px;width:46px;height:1px;background:rgba(0,0,0,0.10);"></div>
<div class="t" style="left:-979px;top:786.44px;width:2000px;text-align:center;font-size:12.5px;color:#5f6660;transform:scaleX(0.87);">23</div>
<div style="left:0px;top:813px;width:46px;height:1px;background:rgba(0,0,0,0.10);"></div>
<div class="t" style="left:-979px;top:810.06px;width:2000px;text-align:center;font-size:12.5px;color:#5f6660;transform:scaleX(0.87);">24</div>
<div style="left:0px;top:836px;width:46px;height:1px;background:rgba(0,0,0,0.10);"></div>
<div class="t" style="left:-979px;top:833.68px;width:2000px;text-align:center;font-size:12.5px;color:#5f6660;transform:scaleX(0.87);">25</div>
<div style="left:0px;top:860px;width:46px;height:1px;background:rgba(0,0,0,0.10);"></div>
<div class="t" style="left:-979px;top:857.33px;width:2000px;text-align:center;font-size:12.5px;color:#5f6660;transform:scaleX(0.87);">26</div>
<div style="left:0px;top:884px;width:46px;height:1px;background:rgba(0,0,0,0.10);"></div>
<div class="t" style="left:-979px;top:898.47px;width:2000px;text-align:center;font-size:12.5px;color:#5f6660;transform:scaleX(0.87);">27</div>
<div style="left:0px;top:942px;width:46px;height:1px;background:rgba(0,0,0,0.10);"></div>
<div class="t" style="left:-979px;top:957.32px;width:2000px;text-align:center;font-size:12.5px;color:#5f6660;transform:scaleX(0.87);">28</div>
<div style="left:0px;top:1001px;width:46px;height:1px;background:rgba(0,0,0,0.10);"></div>
<div class="t" style="left:-979px;top:998.68px;width:2000px;text-align:center;font-size:12.5px;color:#5f6660;transform:scaleX(0.87);">29</div>
<div style="left:0px;top:1025px;width:46px;height:1px;background:rgba(0,0,0,0.10);"></div>
<div class="t" style="left:-979px;top:1022.3px;width:2000px;text-align:center;font-size:12.5px;color:#5f6660;transform:scaleX(0.87);">30</div>
<div style="left:0px;top:1048px;width:46px;height:1px;background:rgba(0,0,0,0.10);"></div>
<div class="t" style="left:-979px;top:1045.92px;width:2000px;text-align:center;font-size:12.5px;color:#5f6660;transform:scaleX(0.87);">31</div>
<div style="left:0px;top:1072px;width:46px;height:1px;background:rgba(0,0,0,0.10);"></div>
<div class="t" style="left:-979px;top:1069.54px;width:2000px;text-align:center;font-size:12.5px;color:#5f6660;transform:scaleX(0.87);">32</div>
<div style="left:0px;top:1096px;width:46px;height:1px;background:rgba(0,0,0,0.10);"></div>
<div class="t" style="left:-979px;top:1093.16px;width:2000px;text-align:center;font-size:12.5px;color:#5f6660;transform:scaleX(0.87);">33</div>
<div style="left:0px;top:1119px;width:46px;height:1px;background:rgba(0,0,0,0.10);"></div>
<div style="left:46px;top:183px;width:1px;height:924px;background:#c8cfca;"></div>
<div style="left:0px;top:158px;width:46px;height:25px;background:#ffffff;"></div>
<div style="left:42px;top:158px;width:4px;height:25px;background:#c9cacc;"></div>
<div style="left:0px;top:179px;width:46px;height:4px;background:#c9cacc;"></div>
<div style="left:2506px;top:158px;width:13px;height:949px;background:#ffffff;"></div>
<div style="left:2505px;top:158px;width:1px;height:949px;background:#e6e6e6;"></div>
<div style="left:2506px;top:183px;width:13px;height:1px;background:#e3e3e3;"></div>
<div style="left:2506px;top:185px;width:10px;height:29px;background:#dadce0;border-radius:5px;"></div>
</div>
<div style="left:0px;top:1107px;width:2519px;height:14px;background:#ffffff;"></div>
<div style="left:0px;top:1107px;width:46px;height:14px;background:#f8f9fa;"></div>
<div style="left:50px;top:1108px;width:1443px;height:10px;background:#dadce0;border-radius:5px;"></div>
<div style="left:0px;top:1120px;width:2519px;height:2px;background:#e3e3e3;"></div>
<div style="left:46px;top:1106px;width:2460px;height:2px;background:#e3e3e3;"></div>
<div style="left:2474px;top:1107px;width:1px;height:14px;background:#ececec;"></div>
<div style="left:2490px;top:1107px;width:1px;height:14px;background:#ececec;"></div>
<div style="left:2505px;top:1107px;width:1px;height:14px;background:#ececec;"></div>
<svg style="left:2481px;top:1111px;" width="5" height="6" viewBox="0 0 5 6" preserveAspectRatio="none"><path d="M5 0V6L0 3Z" fill="#9aa0a6"/></svg>
<svg style="left:2497px;top:1111px;" width="5" height="6" viewBox="0 0 5 6" preserveAspectRatio="none"><path d="M0 0V6L5 3Z" fill="#9aa0a6"/></svg>
<div style="left:2506px;top:1089px;width:13px;height:1px;background:#ececec;"></div>
<svg style="left:2509px;top:1078px;" width="6" height="5" viewBox="0 0 6 5" preserveAspectRatio="none"><path d="M0 5H6L3 0Z" fill="#9aa0a6"/></svg>
<svg style="left:2509px;top:1096px;" width="6" height="5" viewBox="0 0 6 5" preserveAspectRatio="none"><path d="M0 0H6L3 5Z" fill="#9aa0a6"/></svg>
<div style="left:0px;top:1122px;width:2519px;height:40px;background:#f9fbfd;"></div>
<svg style="left:56.5px;top:1136px;" width="15" height="15" viewBox="0 0 15 15" preserveAspectRatio="none"><path d="M7.5 0.5V14.5M0.5 7.5H14.5" stroke="#444746" stroke-width="1.9"/></svg>
<svg style="left:101px;top:1138px;" width="14.5" height="11" viewBox="0 0 14.5 11" preserveAspectRatio="none"><path d="M0 1H14.5M0 4H14.5M0 7H14.5M0 10H14.5" stroke="#444746" stroke-width="1.5"/></svg>
<div style="left:508px;top:1122px;width:194px;height:40px;background:#e1e9f7;"></div>
<div class="t" style="left:159.3px;top:1127.98px;font-size:16.5px;color:#4a4d50;letter-spacing:0.15px;-webkit-text-stroke:0.22px #4a4d50;">Team Leaders</div>
<svg style="left:278px;top:1141.5px" width="9.5" height="4.75" viewBox="0 0 10 5"><path d="M0 0H10L5 5Z" fill="#4a4d50"/></svg>
<div class="t" style="left:315px;top:1127.98px;font-size:16.5px;color:#4a4d50;letter-spacing:0.33px;-webkit-text-stroke:0.22px #4a4d50;">Hackathon Schedule</div>
<svg style="left:486.5px;top:1141.5px" width="9.5" height="4.75" viewBox="0 0 10 5"><path d="M0 0H10L5 5Z" fill="#4a4d50"/></svg>
<div class="t" style="left:521px;top:1127.98px;font-size:16.5px;color:#3b6fd0;letter-spacing:0.43px;-webkit-text-stroke:0.22px #3b6fd0;">Sessions Schedule</div>
<svg style="left:680.7px;top:1141.5px" width="9.5" height="4.75" viewBox="0 0 10 5"><path d="M0 0H10L5 5Z" fill="#3b6fd0"/></svg>
<div class="t" style="left:740px;top:1127.98px;font-size:16.5px;color:#4a4d50;letter-spacing:0.04px;-webkit-text-stroke:0.22px #4a4d50;">FINAL Sessions Schedule</div>
<svg style="left:945px;top:1141.5px" width="9.5" height="4.75" viewBox="0 0 10 5"><path d="M0 0H10L5 5Z" fill="#4a4d50"/></svg>
<div class="t" style="left:981.7px;top:1127.98px;font-size:16.5px;color:#4a4d50;letter-spacing:0.21px;-webkit-text-stroke:0.22px #4a4d50;">Confirmed Sessions</div>
<svg style="left:1145px;top:1141.5px" width="9.5" height="4.75" viewBox="0 0 10 5"><path d="M0 0H10L5 5Z" fill="#4a4d50"/></svg>
<div class="t" style="left:1182.8px;top:1127.98px;font-size:16.5px;color:#4a4d50;letter-spacing:0.46px;-webkit-text-stroke:0.22px #4a4d50;">Build with AI</div>
<svg style="left:1291px;top:1141.5px" width="9.5" height="4.75" viewBox="0 0 10 5"><path d="M0 0H10L5 5Z" fill="#4a4d50"/></svg>
<div class="t" style="left:1328.9px;top:1127.98px;font-size:16.5px;color:#4a4d50;letter-spacing:0.13px;-webkit-text-stroke:0.22px #4a4d50;">Tech+Design</div>
<svg style="left:1438.8px;top:1141.5px" width="9.5" height="4.75" viewBox="0 0 10 5"><path d="M0 0H10L5 5Z" fill="#4a4d50"/></svg>
<div class="t" style="left:1475.5px;top:1127.98px;font-size:16.5px;color:#4a4d50;letter-spacing:0.5px;-webkit-text-stroke:0.22px #4a4d50;">Innovation</div>
<svg style="left:1568.8px;top:1141.5px" width="9.5" height="4.75" viewBox="0 0 10 5"><path d="M0 0H10L5 5Z" fill="#4a4d50"/></svg>
<div class="t" style="left:1606.8px;top:1127.98px;font-size:16.5px;color:#4a4d50;letter-spacing:-0.04px;-webkit-text-stroke:0.22px #4a4d50;">Level Up</div>
<svg style="left:1684px;top:1141.5px" width="9.5" height="4.75" viewBox="0 0 10 5"><path d="M0 0H10L5 5Z" fill="#4a4d50"/></svg>
<div class="t" style="left:1721.2px;top:1127.98px;font-size:16.5px;color:#4a4d50;letter-spacing:0.3px;-webkit-text-stroke:0.22px #4a4d50;">Workshops</div>
<svg style="left:1819px;top:1141.5px" width="9.5" height="4.75" viewBox="0 0 10 5"><path d="M0 0H10L5 5Z" fill="#4a4d50"/></svg>
<div class="t" style="left:1856px;top:1127.98px;font-size:16.5px;color:#4a4d50;letter-spacing:0.42px;-webkit-text-stroke:0.22px #4a4d50;">Booth Support</div>
<svg style="left:1980px;top:1141.5px" width="9.5" height="4.75" viewBox="0 0 10 5"><path d="M0 0H10L5 5Z" fill="#4a4d50"/></svg>
<div class="t" style="left:2016.7px;top:1127.98px;font-size:16.5px;color:#4a4d50;letter-spacing:0.38px;-webkit-text-stroke:0.22px #4a4d50;">Partner Booth Supp</div>
<svg style="left:718.5px;top:1133px;" width="15.5" height="19" viewBox="0 0 15.5 19" preserveAspectRatio="none"><path d="M4 8.5V5.5Q4 1.5 7.75 1.5Q11.5 1.5 11.5 5.5V8.5" fill="none" stroke="#444746" stroke-width="2.2"/><rect x="1" y="8" width="13.5" height="10.5" rx="1.5" fill="#444746"/><circle cx="7.75" cy="13.2" r="1.7" fill="#f9fbfd"/></svg>
<div style="left:2170px;top:1132px;width:1px;height:20px;background:#a0a4a8;"></div>
<svg style="left:2190.5px;top:1137px;" width="9.5" height="12" viewBox="0 0 9.5 12" preserveAspectRatio="none"><path d="M8 1L2 6L8 11" fill="none" stroke="#bdc1c6" stroke-width="1.8"/></svg>
<svg style="left:2236.5px;top:1137px;" width="9.5" height="12" viewBox="0 0 9.5 12" preserveAspectRatio="none"><path d="M1.5 1L7.5 6L1.5 11" fill="none" stroke="#444746" stroke-width="1.8"/></svg>
<div class="t" style="left:2358.8px;top:1127.76px;font-size:16px;color:#1f1f1f;letter-spacing:-0.03px;">Recuento: 6</div>
<svg style="left:2483px;top:1138.5px;" width="10.5" height="12.5" viewBox="0 0 10.5 12.5" preserveAspectRatio="none"><path d="M8.5 1.2L2.5 6.25L8.5 11.3" fill="none" stroke="#5f6368" stroke-width="2.3"/></svg>
</div></body></html>
